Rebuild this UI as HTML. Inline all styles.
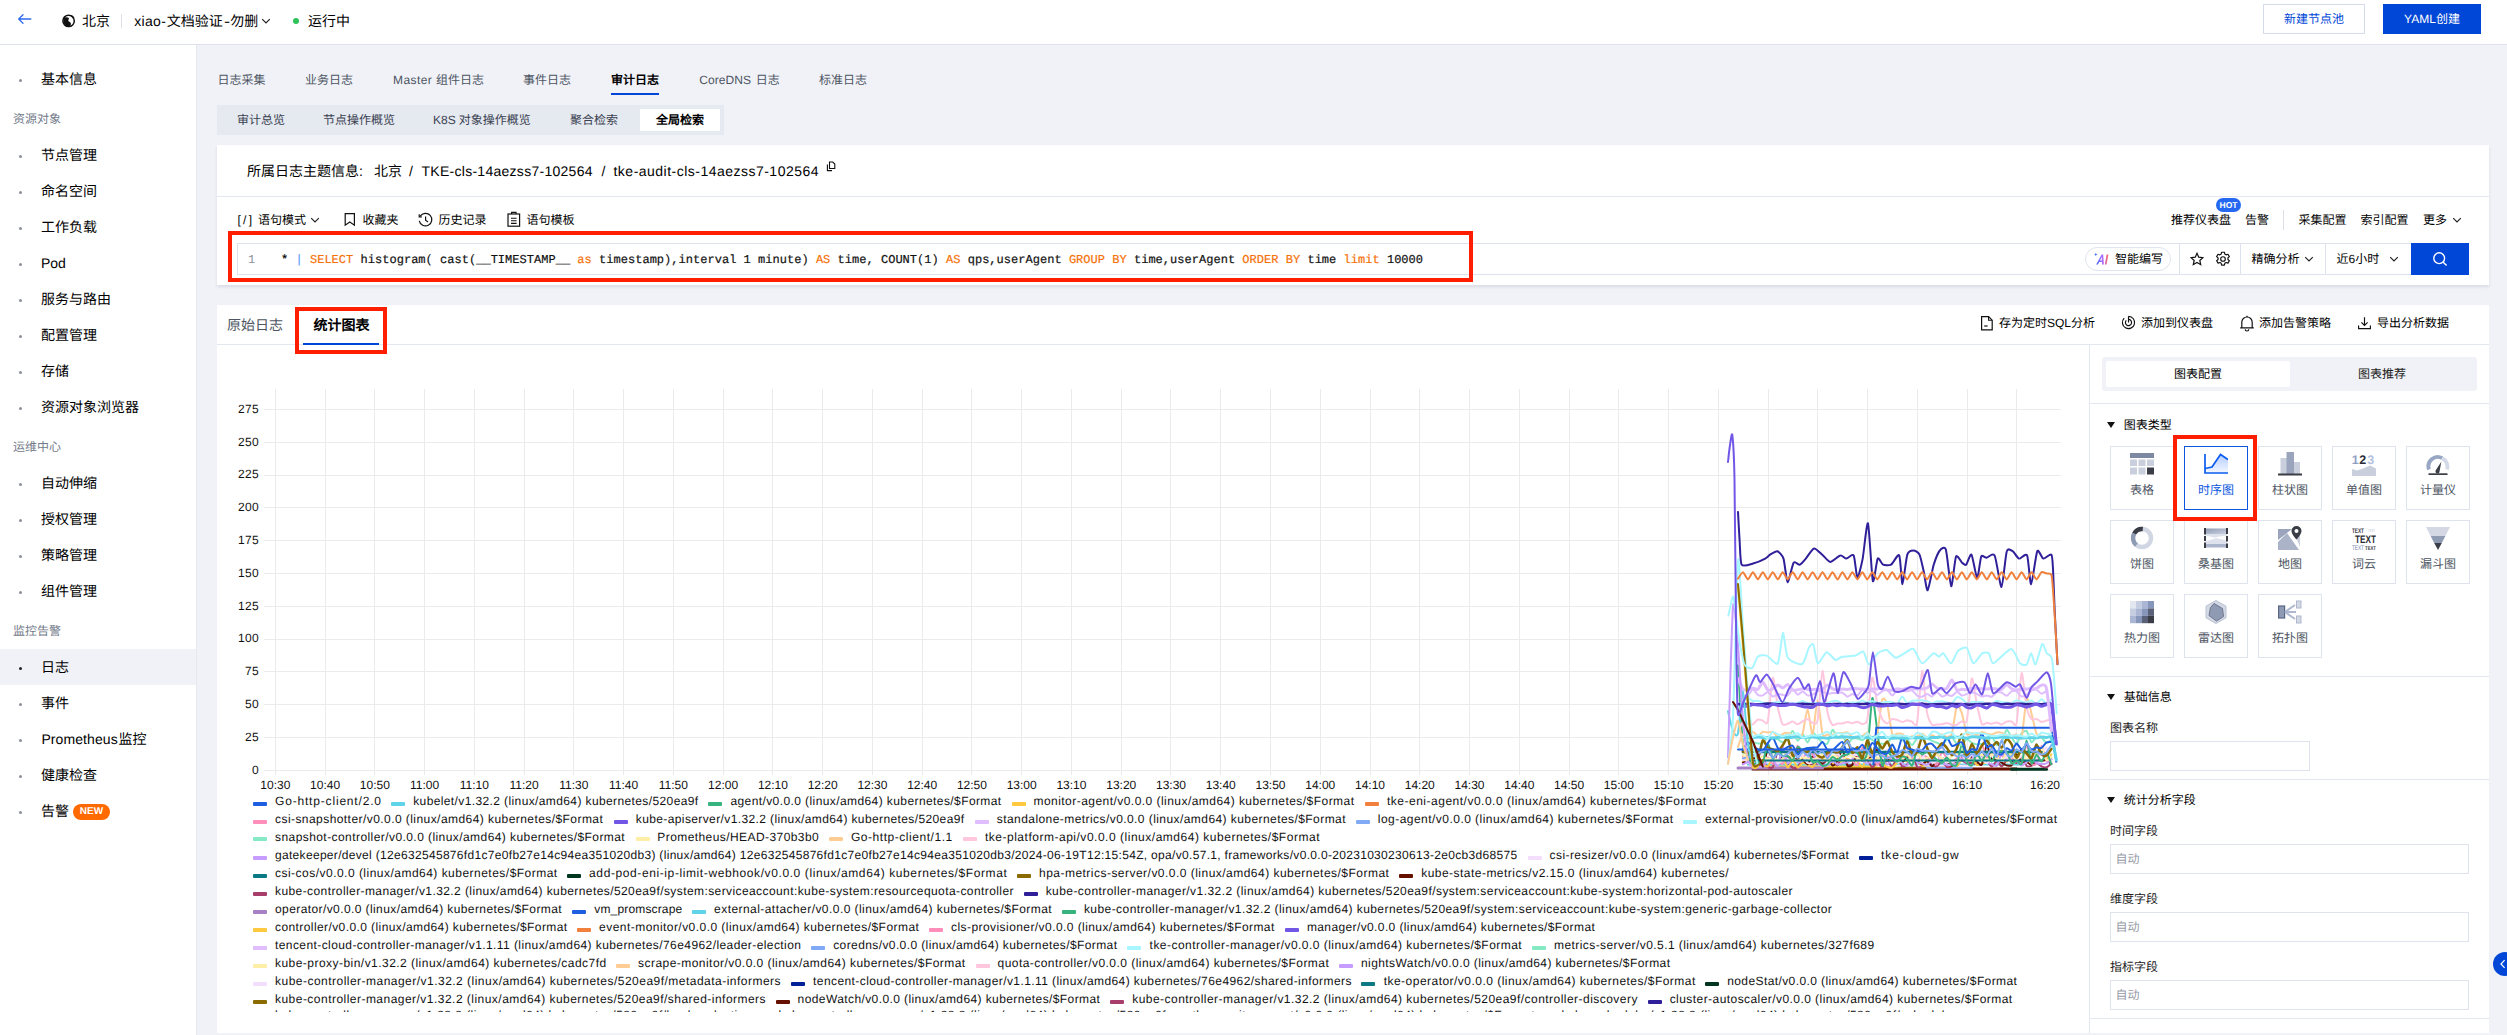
<!DOCTYPE html>
<html lang="zh-CN"><head><meta charset="utf-8"><title>TKE</title><style>
html,body{margin:0;padding:0;overflow:hidden;}
body{width:2507px;height:1035px;overflow:hidden;background:#f0f2f7;font-family:"Liberation Sans", sans-serif;position:relative;text-rendering:geometricPrecision;-webkit-font-smoothing:antialiased;}
.t{position:absolute;white-space:nowrap;margin:0;padding:0;}
.r{position:absolute;box-sizing:border-box;}
.m{font-family:"Liberation Mono", monospace;}
.k{color:#f5720a;}
.t i{font-style:normal;display:inline-block;width:1em;text-align:center;}
.cj{display:inline-block;white-space:nowrap;overflow:visible;vertical-align:top;}
</style></head><body>
<div class="r" style="left:0px;top:0px;width:2507px;height:44px;background:#fff;"></div>
<div class="r" style="left:0px;top:44px;width:2507px;height:1px;background:#dde2ee;"></div>
<svg class="r" style="left:17px;top:11px;" width="16" height="16" viewBox="0 0 16 16"><path d="M13.8 8H1.8M6 3.7L1.7 8 6 12.3" fill="none" stroke="#2f6bf2" stroke-width="1.3" stroke-linecap="round" stroke-linejoin="round"/></svg>
<svg class="r" style="left:62px;top:14px;" width="14" height="14" viewBox="0 0 14 14"><circle cx="6.6" cy="6.9" r="5.7" fill="none" stroke="#111" stroke-width="1.5"/><path d="M1.4 4.3C2.6 3.3 5.2 2.6 6.6 3.8 7.8 4.9 5.8 5.9 6.4 7c.5 .9 2.2 .8 2.5 2.4.3 1.5-.8 2.6-2 3.2L4 12 1.5 9z" fill="#111"/><path d="M7.8 1.3c.3 1.1 1.3 1.2 2.1 1.7.8 .5 .6 1.4 1.7 1.9l.6-1.5-1.8-2z" fill="#111"/></svg>
<div class="t " style="left:82px;top:11px;font-size:14px;line-height:20px;color:#000;"><i>北</i><i>京</i></div>
<div class="r" style="left:121px;top:14px;width:1px;height:14px;background:#dcdfe6;"></div>
<div class="t " style="left:134.3px;top:11px;font-size:14px;line-height:20px;color:#000;letter-spacing:0.310px;">xiao-</div>
<div class="t " style="left:166.8px;top:11px;font-size:14px;line-height:20px;color:#000;"><i>文</i><i>档</i><i>验</i><i>证</i></div>
<div class="t " style="left:224.3px;top:11px;font-size:14px;line-height:20px;color:#000;transform:scaleX(1.3);transform-origin:0 0;">-</div>
<div class="t " style="left:230.2px;top:11px;font-size:14px;line-height:20px;color:#000;"><i>勿</i><i>删</i></div>
<svg class="r" style="left:261px;top:16px;" width="10" height="10" viewBox="0 0 10 10"><path d="M1.2 3.2L5 7l3.8-3.8" fill="none" stroke="#222" stroke-width="1.2"/></svg>
<div class="r" style="left:293px;top:18px;width:6px;height:6px;background:#2fc25b;border-radius:50%;"></div>
<div class="t " style="left:308px;top:11px;font-size:14px;line-height:20px;color:#000;"><i>运</i><i>行</i><i>中</i></div>
<div class="r" style="left:2263px;top:4px;width:102px;height:30px;background:#fff;border:1px solid #d4dbe9;"></div>
<div class="t " style="left:2263px;top:9px;font-size:12px;line-height:20px;color:#0046d7;width:102px;text-align:center;"><i>新</i><i>建</i><i>节</i><i>点</i><i>池</i></div>
<div class="r" style="left:2383px;top:4px;width:98px;height:30px;background:#0046d7;"></div>
<div class="t " style="left:2383px;top:9px;font-size:12px;line-height:20px;color:#fff;width:98px;text-align:center;">YAML<i>创</i><i>建</i></div>
<div class="r" style="left:0px;top:45px;width:196px;height:990px;background:#fff;"></div>
<div class="r" style="left:196px;top:45px;width:1px;height:990px;background:#e4e8f0;"></div>
<div class="r" style="left:0px;top:649px;width:196px;height:36px;background:#f0f2f7;"></div>
<div class="r" style="left:19px;top:79px;width:3px;height:3px;background:#8a8f99;border-radius:50%;"></div>
<div class="t " style="left:41px;top:68px;font-size:14px;line-height:22px;color:#000;"><i>基</i><i>本</i><i>信</i><i>息</i></div>
<div class="r" style="left:19px;top:155px;width:3px;height:3px;background:#8a8f99;border-radius:50%;"></div>
<div class="t " style="left:41px;top:144px;font-size:14px;line-height:22px;color:#000;"><i>节</i><i>点</i><i>管</i><i>理</i></div>
<div class="r" style="left:19px;top:191px;width:3px;height:3px;background:#8a8f99;border-radius:50%;"></div>
<div class="t " style="left:41px;top:180px;font-size:14px;line-height:22px;color:#000;"><i>命</i><i>名</i><i>空</i><i>间</i></div>
<div class="r" style="left:19px;top:227px;width:3px;height:3px;background:#8a8f99;border-radius:50%;"></div>
<div class="t " style="left:41px;top:216px;font-size:14px;line-height:22px;color:#000;"><i>工</i><i>作</i><i>负</i><i>载</i></div>
<div class="r" style="left:19px;top:263px;width:3px;height:3px;background:#8a8f99;border-radius:50%;"></div>
<div class="t " style="left:41px;top:252px;font-size:14px;line-height:22px;color:#000;">Pod</div>
<div class="r" style="left:19px;top:299px;width:3px;height:3px;background:#8a8f99;border-radius:50%;"></div>
<div class="t " style="left:41px;top:288px;font-size:14px;line-height:22px;color:#000;"><i>服</i><i>务</i><i>与</i><i>路</i><i>由</i></div>
<div class="r" style="left:19px;top:335px;width:3px;height:3px;background:#8a8f99;border-radius:50%;"></div>
<div class="t " style="left:41px;top:324px;font-size:14px;line-height:22px;color:#000;"><i>配</i><i>置</i><i>管</i><i>理</i></div>
<div class="r" style="left:19px;top:371px;width:3px;height:3px;background:#8a8f99;border-radius:50%;"></div>
<div class="t " style="left:41px;top:360px;font-size:14px;line-height:22px;color:#000;"><i>存</i><i>储</i></div>
<div class="r" style="left:19px;top:407px;width:3px;height:3px;background:#8a8f99;border-radius:50%;"></div>
<div class="t " style="left:41px;top:396px;font-size:14px;line-height:22px;color:#000;"><i>资</i><i>源</i><i>对</i><i>象</i><i>浏</i><i>览</i><i>器</i></div>
<div class="r" style="left:19px;top:483px;width:3px;height:3px;background:#8a8f99;border-radius:50%;"></div>
<div class="t " style="left:41px;top:472px;font-size:14px;line-height:22px;color:#000;"><i>自</i><i>动</i><i>伸</i><i>缩</i></div>
<div class="r" style="left:19px;top:519px;width:3px;height:3px;background:#8a8f99;border-radius:50%;"></div>
<div class="t " style="left:41px;top:508px;font-size:14px;line-height:22px;color:#000;"><i>授</i><i>权</i><i>管</i><i>理</i></div>
<div class="r" style="left:19px;top:555px;width:3px;height:3px;background:#8a8f99;border-radius:50%;"></div>
<div class="t " style="left:41px;top:544px;font-size:14px;line-height:22px;color:#000;"><i>策</i><i>略</i><i>管</i><i>理</i></div>
<div class="r" style="left:19px;top:591px;width:3px;height:3px;background:#8a8f99;border-radius:50%;"></div>
<div class="t " style="left:41px;top:580px;font-size:14px;line-height:22px;color:#000;"><i>组</i><i>件</i><i>管</i><i>理</i></div>
<div class="r" style="left:19px;top:667px;width:3px;height:3px;background:#222;border-radius:50%;"></div>
<div class="t " style="left:41px;top:656px;font-size:14px;line-height:22px;color:#000;"><i>日</i><i>志</i></div>
<div class="r" style="left:19px;top:703px;width:3px;height:3px;background:#8a8f99;border-radius:50%;"></div>
<div class="t " style="left:41px;top:692px;font-size:14px;line-height:22px;color:#000;"><i>事</i><i>件</i></div>
<div class="r" style="left:19px;top:739px;width:3px;height:3px;background:#8a8f99;border-radius:50%;"></div>
<div class="t " style="left:41px;top:728px;font-size:14px;line-height:22px;color:#000;"></div>
<div class="r" style="left:19px;top:775px;width:3px;height:3px;background:#8a8f99;border-radius:50%;"></div>
<div class="t " style="left:41px;top:764px;font-size:14px;line-height:22px;color:#000;"><i>健</i><i>康</i><i>检</i><i>查</i></div>
<div class="r" style="left:19px;top:811px;width:3px;height:3px;background:#8a8f99;border-radius:50%;"></div>
<div class="t " style="left:41px;top:800px;font-size:14px;line-height:22px;color:#000;"><i>告</i><i>警</i></div>
<div class="t " style="left:41.4px;top:728px;font-size:14px;line-height:22px;color:#000;letter-spacing:0.091px;">Prometheus</div>
<div class="t " style="left:118.5px;top:728px;font-size:14px;line-height:22px;color:#000;"><i>监</i><i>控</i></div>
<div class="t " style="left:13px;top:109px;font-size:12px;line-height:20px;color:#727a89;"><i>资</i><i>源</i><i>对</i><i>象</i></div>
<div class="t " style="left:13px;top:437px;font-size:12px;line-height:20px;color:#727a89;"><i>运</i><i>维</i><i>中</i><i>心</i></div>
<div class="t " style="left:13px;top:621px;font-size:12px;line-height:20px;color:#727a89;"><i>监</i><i>控</i><i>告</i><i>警</i></div>
<div class="r" style="left:73px;top:804px;width:37px;height:16px;background:#ff6a00;border-radius:8px;"></div>
<div class="t " style="left:73px;top:804px;font-size:10px;line-height:16px;color:#fff;font-weight:700;width:37px;text-align:center;letter-spacing:.1px;">NEW</div>
<div class="t " style="left:393px;top:69.5px;font-size:12px;line-height:20px;color:#4d5563;letter-spacing:0.422px;">Master</div>
<div class="t " style="left:699.3px;top:69.5px;font-size:12px;line-height:20px;color:#4d5563;letter-spacing:0.057px;">CoreDNS</div>
<div class="t " style="left:217.5px;top:69.5px;font-size:12px;line-height:20px;color:#4d5563;"><i>日</i><i>志</i><i>采</i><i>集</i></div>
<div class="t " style="left:305px;top:69.5px;font-size:12px;line-height:20px;color:#4d5563;"><i>业</i><i>务</i><i>日</i><i>志</i></div>
<div class="t " style="left:436px;top:69.5px;font-size:12px;line-height:20px;color:#4d5563;"><i>组</i><i>件</i><i>日</i><i>志</i></div>
<div class="t " style="left:523px;top:69.5px;font-size:12px;line-height:20px;color:#4d5563;"><i>事</i><i>件</i><i>日</i><i>志</i></div>
<div class="t " style="left:611px;top:69.5px;font-size:12px;line-height:20px;color:#000;font-weight:700;"><i>审</i><i>计</i><i>日</i><i>志</i></div>
<div class="t " style="left:755.7px;top:69.5px;font-size:12px;line-height:20px;color:#4d5563;"><i>日</i><i>志</i></div>
<div class="t " style="left:819px;top:69.5px;font-size:12px;line-height:20px;color:#4d5563;"><i>标</i><i>准</i><i>日</i><i>志</i></div>
<div class="r" style="left:611px;top:93px;width:48px;height:2px;background:#0046d7;"></div>
<div class="r" style="left:217px;top:105px;width:507px;height:30px;background:#e5e9f0;"></div>
<div class="r" style="left:640px;top:109px;width:80px;height:22px;background:#fff;"></div>
<div class="t " style="left:237px;top:109.5px;font-size:12px;line-height:20px;color:#3a4150;"><i>审</i><i>计</i><i>总</i><i>览</i></div>
<div class="t " style="left:323px;top:109.5px;font-size:12px;line-height:20px;color:#3a4150;"><i>节</i><i>点</i><i>操</i><i>作</i><i>概</i><i>览</i></div>
<div class="t " style="left:458.8px;top:109.5px;font-size:12px;line-height:20px;color:#3a4150;"><i>对</i><i>象</i><i>操</i><i>作</i><i>概</i><i>览</i></div>
<div class="t " style="left:570px;top:109.5px;font-size:12px;line-height:20px;color:#3a4150;"><i>聚</i><i>合</i><i>检</i><i>索</i></div>
<div class="t " style="left:656px;top:109.5px;font-size:12px;line-height:20px;color:#000;font-weight:700;"><i>全</i><i>局</i><i>检</i><i>索</i></div>
<div class="t " style="left:433px;top:109.5px;font-size:12px;line-height:20px;color:#3a4150;">K8S</div>
<div class="r" style="left:217px;top:145px;width:2272px;height:140px;background:#fff;box-shadow:0 2px 3px rgba(20,30,60,.10);"></div>
<div class="t " style="left:247px;top:160px;font-size:14px;line-height:22px;color:#000;"><i>所</i><i>属</i><i>日</i><i>志</i><i>主</i><i>题</i><i>信</i><i>息</i>:</div>
<div class="t " style="left:374px;top:160px;font-size:14px;line-height:22px;color:#000;"><i>北</i><i>京</i></div>
<div class="t " style="left:409px;top:160px;font-size:14px;line-height:22px;color:#000;">/</div>
<div class="t " style="left:421.5px;top:160px;font-size:14px;line-height:22px;color:#000;letter-spacing:0.273px;">TKE-cls-14aezss7-102564</div>
<div class="t " style="left:601.5px;top:160px;font-size:14px;line-height:22px;color:#000;">/</div>
<div class="t " style="left:613.5px;top:160px;font-size:14px;line-height:22px;color:#000;letter-spacing:0.484px;">tke-audit-cls-14aezss7-102564</div>
<svg class="r" style="left:826px;top:161px;" width="10" height="11" viewBox="0 0 10 11"><path d="M3.5 1h3.2L8.8 3v4.5H3.5z" fill="none" stroke="#111" stroke-width="1.1"/><path d="M1.4 3.6v6h4.6" fill="none" stroke="#111" stroke-width="1.1"/></svg>
<div class="r" style="left:217px;top:196px;width:2272px;height:1px;background:#e3e7ef;"></div>
<div class="t " style="left:237.5px;top:209.5px;font-size:12px;line-height:20px;color:#000;letter-spacing:2.242px;">[/]</div>
<div class="t " style="left:258px;top:209.5px;font-size:12px;line-height:20px;color:#000;"><i>语</i><i>句</i><i>模</i><i>式</i></div>
<svg class="r" style="left:310px;top:215px;" width="10" height="10" viewBox="0 0 10 10"><path d="M1.2 3.2L5 7l3.8-3.8" fill="none" stroke="#222" stroke-width="1.2"/></svg>
<svg class="r" style="left:343px;top:212px;" width="14" height="15" viewBox="0 0 14 15"><path d="M2.2 1.6h9.2v11.6L6.8 10 2.2 13.2z" fill="none" stroke="#111" stroke-width="1.2" stroke-linejoin="miter"/></svg>
<div class="t " style="left:362.5px;top:209.5px;font-size:12px;line-height:20px;color:#000;"><i>收</i><i>藏</i><i>夹</i></div>
<svg class="r" style="left:417px;top:212px;" width="17" height="16" viewBox="0 0 17 16"><path d="M3.2 4.2A6.3 6.3 0 1 1 2.3 8.8" fill="none" stroke="#111" stroke-width="1.2"/><path d="M2.2 2.2v2.6h2.6" fill="none" stroke="#111" stroke-width="1.2"/><path d="M8.6 4.6V8.3l2.4 1.6" fill="none" stroke="#111" stroke-width="1.2"/></svg>
<div class="t " style="left:438.5px;top:209.5px;font-size:12px;line-height:20px;color:#000;"><i>历</i><i>史</i><i>记</i><i>录</i></div>
<svg class="r" style="left:506px;top:211px;" width="16" height="17" viewBox="0 0 16 17"><rect x="2" y="3" width="11.6" height="12.2" fill="none" stroke="#111" stroke-width="1.2"/><path d="M5.6 3V1.4h4.4V3" fill="none" stroke="#111" stroke-width="1.2"/><path d="M5 7.2h5.6M5 9.8h5.6M5 12.4h5.6" stroke="#111" stroke-width="1.1"/></svg>
<div class="t " style="left:526.5px;top:209.5px;font-size:12px;line-height:20px;color:#000;"><i>语</i><i>句</i><i>模</i><i>板</i></div>
<div class="t " style="left:2171px;top:209.5px;font-size:12px;line-height:20px;color:#000;"><i>推</i><i>荐</i><i>仪</i><i>表</i><i>盘</i></div>
<div class="r" style="left:2216px;top:198px;width:25px;height:14px;background:#2468f2;border-radius:7px;"></div>
<div class="t " style="left:2216px;top:198px;font-size:8.5px;line-height:14px;color:#fff;font-weight:700;width:25px;text-align:center;">HOT</div>
<div class="t " style="left:2245px;top:209.5px;font-size:12px;line-height:20px;color:#000;"><i>告</i><i>警</i></div>
<div class="r" style="left:2283px;top:210px;width:1px;height:20px;background:#dcdfe6;"></div>
<div class="t " style="left:2298.5px;top:209.5px;font-size:12px;line-height:20px;color:#000;"><i>采</i><i>集</i><i>配</i><i>置</i></div>
<div class="t " style="left:2360.5px;top:209.5px;font-size:12px;line-height:20px;color:#000;"><i>索</i><i>引</i><i>配</i><i>置</i></div>
<div class="t " style="left:2423px;top:209.5px;font-size:12px;line-height:20px;color:#000;"><i>更</i><i>多</i></div>
<svg class="r" style="left:2452px;top:215px;" width="10" height="10" viewBox="0 0 10 10"><path d="M1.2 3.2L5 7l3.8-3.8" fill="none" stroke="#222" stroke-width="1.2"/></svg>
<div class="r" style="left:237px;top:243px;width:2175px;height:32px;background:#fff;border:1px solid #dde2ee;"></div>
<div class="t  m" style="left:248px;top:249.7px;font-size:12px;line-height:20px;color:#8a8f99;">1</div>
<div class="t  m" style="left:281px;top:249.7px;font-size:12px;line-height:20px;color:#111;white-space:pre;letter-spacing:.026px;-webkit-text-stroke-width:.2px;"><span style="color:#000">* </span><span style="color:#5aa5f5">|</span> <span class="k">SELECT</span> histogram( cast(__TIMESTAMP__ <span class="k">as</span> timestamp),interval 1 minute) <span class="k">AS</span> time, COUNT(1) <span class="k">AS</span> qps,userAgent <span class="k">GROUP BY</span> time,userAgent <span class="k">ORDER BY</span> time <span class="k">limit</span> 10000</div>
<div class="r" style="left:2085px;top:247px;width:86px;height:24px;background:#fff;border:1px solid #dfe4ee;border-radius:12px;"></div>
<svg class="r" style="left:2094px;top:252px;" width="17" height="14" viewBox="0 0 17 14"><defs><linearGradient id="ai" x1="0" y1="0" x2="1" y2="0"><stop offset="0" stop-color="#3d6bff"/><stop offset=".55" stop-color="#b36bff"/><stop offset="1" stop-color="#ff6a5c"/></linearGradient></defs><path d="M2.2 12.4L7.6 2.4h1.6l.7 10h-1.8l-.15-2.3H5.2L4 12.4zM6 8.6h1.9l-.25-3.9zM12.6 2.4h1.8l-1.8 10h-1.8z" fill="url(#ai)"/><path d="M1.8 0.8l.5 1.2 1.2.5-1.2.5-.5 1.2-.5-1.2L.1 2.5l1.2-.5z" fill="#3d6bff"/></svg>
<div class="t " style="left:2115px;top:249px;font-size:12px;line-height:20px;color:#000;"><i>智</i><i>能</i><i>编</i><i>写</i></div>
<div class="r" style="left:2179px;top:244px;width:1px;height:30px;background:#dde2ee;"></div>
<svg class="r" style="left:2190px;top:252px;" width="14" height="14" viewBox="0 0 14 14"><path d="M7 1.3l1.75 3.9 4.2.45-3.15 2.85.9 4.15L7 10.5l-3.7 2.15.9-4.15L1.05 5.65l4.2-.45z" fill="none" stroke="#111" stroke-width="1.2" stroke-linejoin="miter"/></svg>
<svg class="r" style="left:2215px;top:251px;" width="16" height="16" viewBox="0 0 16 16"><path d="M6.6 1.2h2.8l.4 1.9 1.3.75 1.85-.6 1.4 2.4-1.45 1.3v1.5l1.45 1.3-1.4 2.4-1.85-.6-1.3.75-.4 1.9H6.6l-.4-1.9-1.3-.75-1.85.6-1.4-2.4 1.45-1.3v-1.5L1.65 5.65l1.4-2.4 1.85.6 1.3-.75z" fill="none" stroke="#111" stroke-width="1.15" stroke-linejoin="round"/><circle cx="8" cy="8" r="2.3" fill="none" stroke="#111" stroke-width="1.15"/></svg>
<div class="r" style="left:2240px;top:244px;width:1px;height:30px;background:#dde2ee;"></div>
<div class="t " style="left:2251.5px;top:249px;font-size:12px;line-height:20px;color:#000;"><i>精</i><i>确</i><i>分</i><i>析</i></div>
<svg class="r" style="left:2304px;top:254px;" width="10" height="10" viewBox="0 0 10 10"><path d="M1.2 3.2L5 7l3.8-3.8" fill="none" stroke="#222" stroke-width="1.2"/></svg>
<div class="r" style="left:2325px;top:244px;width:1px;height:30px;background:#dde2ee;"></div>
<div class="t " style="left:2336.5px;top:249px;font-size:12px;line-height:20px;color:#000;"><i>近</i>6<i>小</i><i>时</i></div>
<svg class="r" style="left:2389px;top:254px;" width="10" height="10" viewBox="0 0 10 10"><path d="M1.2 3.2L5 7l3.8-3.8" fill="none" stroke="#222" stroke-width="1.2"/></svg>
<div class="r" style="left:2411px;top:243px;width:58px;height:32px;background:#0046d7;"></div>
<svg class="r" style="left:2432px;top:251px;" width="16" height="16" viewBox="0 0 16 16"><circle cx="7.2" cy="7.2" r="5.4" fill="none" stroke="#fff" stroke-width="1.4"/><path d="M11.2 11.2l3.4 3.4" stroke="#fff" stroke-width="1.4"/></svg>
<div class="r" style="left:228px;top:231px;width:1245px;height:51px;border:4px solid #ff1e00;"></div>
<div class="r" style="left:217px;top:305px;width:2272px;height:728px;background:#fff;"></div>
<div class="r" style="left:217px;top:344px;width:2272px;height:1px;background:#e3e7ef;"></div>
<div class="t " style="left:227px;top:314px;font-size:14px;line-height:22px;color:#4d5563;"><i>原</i><i>始</i><i>日</i><i>志</i></div>
<div class="t " style="left:313.5px;top:314px;font-size:14px;line-height:22px;color:#000;font-weight:700;"><i>统</i><i>计</i><i>图</i><i>表</i></div>
<div class="r" style="left:303px;top:343px;width:76px;height:2px;background:#0046d7;"></div>
<div class="r" style="left:295px;top:307px;width:92px;height:47px;border:4px solid #ff1e00;"></div>
<svg class="r" style="left:1980px;top:315px;" width="14" height="16" viewBox="0 0 14 16"><path d="M1.6 1.6h7l3.6 3.6v9.6H1.6z" fill="none" stroke="#111" stroke-width="1.2"/><path d="M8.6 1.8v3.4h3.4" fill="none" stroke="#111" stroke-width="1.1"/><path d="M4.2 11h3.4" stroke="#111" stroke-width="1.2"/></svg>
<div class="t " style="left:1999px;top:312.5px;font-size:12px;line-height:20px;color:#000;"><span class="cj" style="width:48px"><i>存</i><i>为</i><i>定</i><i>时</i></span>SQL<span class="cj"><i>分</i><i>析</i></span></div>
<svg class="r" style="left:2121px;top:315px;" width="15" height="15" viewBox="0 0 15 15"><path d="M7.5 1.4A6.1 6.1 0 1 1 3.2 3.2" fill="none" stroke="#111" stroke-width="1.15"/><path d="M7.5 4.4A3.1 3.1 0 1 1 5.3 5.3" fill="none" stroke="#111" stroke-width="1.15"/><path d="M7.5 1.4v6.1" stroke="#111" stroke-width="1.15"/></svg>
<div class="t " style="left:2141px;top:312.5px;font-size:12px;line-height:20px;color:#000;"><i>添</i><i>加</i><i>到</i><i>仪</i><i>表</i><i>盘</i></div>
<svg class="r" style="left:2239px;top:314px;" width="16" height="18" viewBox="0 0 16 18"><path d="M1.2 13.8h13.6M2.8 13.8V8.2a5.2 5.2 0 0 1 10.4 0v5.6" fill="none" stroke="#111" stroke-width="1.2"/><path d="M6.2 15.2a1.8 1.8 0 0 0 3.6 0" fill="none" stroke="#111" stroke-width="1.15"/><path d="M8 1.8v1.3" stroke="#111" stroke-width="1.2"/></svg>
<div class="t " style="left:2259px;top:312.5px;font-size:12px;line-height:20px;color:#000;"><i>添</i><i>加</i><i>告</i><i>警</i><i>策</i><i>略</i></div>
<svg class="r" style="left:2357px;top:316px;" width="15" height="14" viewBox="0 0 15 14"><path d="M7.5 1.2v8M4.4 6.4l3.1 3 3.1-3" fill="none" stroke="#111" stroke-width="1.15"/><path d="M1.6 9.4v3.2h11.8V9.4" fill="none" stroke="#111" stroke-width="1.15"/></svg>
<div class="t " style="left:2377px;top:312.5px;font-size:12px;line-height:20px;color:#000;"><i>导</i><i>出</i><i>分</i><i>析</i><i>数</i><i>据</i></div>
<div class="r" style="left:2493px;top:952px;width:14px;height:24px;overflow:hidden"><div class="r" style="left:0;top:0;width:24px;height:24px;border-radius:50%;background:#0046d7"></div></div>
<svg class="r" style="left:2499px;top:959px;" width="8" height="10" viewBox="0 0 8 10"><path d="M5.6 1.2L2 5l3.6 3.8" fill="none" stroke="#fff" stroke-width="1.2"/></svg>
<svg class="r" style="left:0;top:0" width="2100" height="800" viewBox="0 0 2100 800"><path d="M264 770.5H2060.5" stroke="#eaebed" stroke-width="1"/><path d="M264 737.5H2060.5" stroke="#eaebed" stroke-width="1"/><path d="M264 704.5H2060.5" stroke="#eaebed" stroke-width="1"/><path d="M264 671.5H2060.5" stroke="#eaebed" stroke-width="1"/><path d="M264 639.5H2060.5" stroke="#eaebed" stroke-width="1"/><path d="M264 606.5H2060.5" stroke="#eaebed" stroke-width="1"/><path d="M264 573.5H2060.5" stroke="#eaebed" stroke-width="1"/><path d="M264 540.5H2060.5" stroke="#eaebed" stroke-width="1"/><path d="M264 507.5H2060.5" stroke="#eaebed" stroke-width="1"/><path d="M264 475.5H2060.5" stroke="#eaebed" stroke-width="1"/><path d="M264 442.5H2060.5" stroke="#eaebed" stroke-width="1"/><path d="M264 409.5H2060.5" stroke="#eaebed" stroke-width="1"/><path d="M275.5 389V775" stroke="#eaebed" stroke-width="1"/><path d="M325.5 389V775" stroke="#eaebed" stroke-width="1"/><path d="M374.5 389V775" stroke="#eaebed" stroke-width="1"/><path d="M424.5 389V775" stroke="#eaebed" stroke-width="1"/><path d="M474.5 389V775" stroke="#eaebed" stroke-width="1"/><path d="M524.5 389V775" stroke="#eaebed" stroke-width="1"/><path d="M573.5 389V775" stroke="#eaebed" stroke-width="1"/><path d="M623.5 389V775" stroke="#eaebed" stroke-width="1"/><path d="M673.5 389V775" stroke="#eaebed" stroke-width="1"/><path d="M723.5 389V775" stroke="#eaebed" stroke-width="1"/><path d="M772.5 389V775" stroke="#eaebed" stroke-width="1"/><path d="M822.5 389V775" stroke="#eaebed" stroke-width="1"/><path d="M872.5 389V775" stroke="#eaebed" stroke-width="1"/><path d="M922.5 389V775" stroke="#eaebed" stroke-width="1"/><path d="M971.5 389V775" stroke="#eaebed" stroke-width="1"/><path d="M1021.5 389V775" stroke="#eaebed" stroke-width="1"/><path d="M1071.5 389V775" stroke="#eaebed" stroke-width="1"/><path d="M1121.5 389V775" stroke="#eaebed" stroke-width="1"/><path d="M1170.5 389V775" stroke="#eaebed" stroke-width="1"/><path d="M1220.5 389V775" stroke="#eaebed" stroke-width="1"/><path d="M1270.5 389V775" stroke="#eaebed" stroke-width="1"/><path d="M1320.5 389V775" stroke="#eaebed" stroke-width="1"/><path d="M1370.5 389V775" stroke="#eaebed" stroke-width="1"/><path d="M1419.5 389V775" stroke="#eaebed" stroke-width="1"/><path d="M1469.5 389V775" stroke="#eaebed" stroke-width="1"/><path d="M1519.5 389V775" stroke="#eaebed" stroke-width="1"/><path d="M1569.5 389V775" stroke="#eaebed" stroke-width="1"/><path d="M1618.5 389V775" stroke="#eaebed" stroke-width="1"/><path d="M1668.5 389V775" stroke="#eaebed" stroke-width="1"/><path d="M1718.5 389V775" stroke="#eaebed" stroke-width="1"/><path d="M1768.5 389V775" stroke="#eaebed" stroke-width="1"/><path d="M1817.5 389V775" stroke="#eaebed" stroke-width="1"/><path d="M1867.5 389V775" stroke="#eaebed" stroke-width="1"/><path d="M1917.5 389V775" stroke="#eaebed" stroke-width="1"/><path d="M1967.5 389V775" stroke="#eaebed" stroke-width="1"/><path d="M2016.5 389V775" stroke="#eaebed" stroke-width="1"/><path d="M1752.9 769.1L1757.9 769.1L1762.8 769.1L1767.8 769.1L1772.8 769.1L1777.8 769.1L1782.7 769.1L1787.7 769.1L1792.7 769.1L1797.7 769.1L1802.6 769.1L1807.6 769.1L1812.6 769.1L1817.6 769.1L1822.5 769.1L1827.5 769.1L1832.5 769.1L1837.5 769.1L1842.4 769.1L1847.4 769.1L1852.4 769.1L1857.4 769.1L1862.4 769.1L1867.3 769.1L1872.3 769.1L1877.3 769.1L1882.3 769.1L1887.2 769.1L1892.2 769.1L1897.2 769.1L1902.2 769.1L1907.1 769.1L1912.1 769.1L1917.1 769.1L1922.1 769.1L1927.0 769.1L1932.0 769.1L1937.0 769.1L1942.0 769.1L1946.9 769.1L1951.9 769.1L1956.9 769.1L1961.9 769.1L1966.8 769.1L1971.8 769.1L1976.8 769.1L1981.8 769.1L1986.8 769.1L1991.7 769.1L1996.7 769.1L2001.7 769.1L2006.7 769.1L2011.6 769.1L2016.6 769.1" fill="none" stroke="#661100" stroke-width="3" stroke-linejoin="round" stroke-linecap="round"/><path d="M2011.6 769.3L2016.6 769.3L2021.6 769.3L2026.6 769.3L2031.5 769.3L2036.5 769.3L2041.5 769.3L2046.5 769.3" fill="none" stroke="#00361f" stroke-width="3" stroke-linejoin="round" stroke-linecap="round"/><path d="M1757.9 767.1L1762.8 767.1L1767.8 767.1L1772.8 767.1L1777.8 767.1L1782.7 767.1L1787.7 767.1L1792.7 767.1L1797.7 767.1L1802.6 767.1L1807.6 767.1L1812.6 767.1L1817.6 767.1L1822.5 767.1L1827.5 767.1L1832.5 767.1L1837.5 767.1L1842.4 767.1L1847.4 767.1L1852.4 767.1L1857.4 767.1L1862.4 767.1L1867.3 767.1L1872.3 767.1L1877.3 767.1L1882.3 767.1L1887.2 767.1L1892.2 767.1L1897.2 767.1L1902.2 767.1L1907.1 767.1L1912.1 767.1L1917.1 767.1L1922.1 767.1L1927.0 767.1L1932.0 767.1L1937.0 767.1L1942.0 767.1L1946.9 767.1L1951.9 767.1" fill="none" stroke="#8a6b00" stroke-width="2.5" stroke-linejoin="round" stroke-linecap="round"/><path d="M1752.9 766.2L1757.9 766.2L1762.8 766.2L1767.8 766.2L1772.8 766.2L1777.8 766.2L1782.7 766.2L1787.7 766.2L1792.7 766.2L1797.7 766.2L1802.6 766.2L1807.6 766.2L1812.6 766.2L1817.6 766.2L1822.5 766.2L1827.5 766.2L1832.5 766.2L1837.5 766.2L1842.4 766.2L1847.4 766.2L1852.4 766.2L1857.4 766.2L1862.4 766.2L1867.3 766.2L1872.3 766.2L1877.3 766.2L1882.3 766.2L1887.2 766.2L1892.2 766.2L1897.2 766.2" fill="none" stroke="#ffc93f" stroke-width="2" stroke-linejoin="round" stroke-linecap="round"/><path d="M1747.9 764.5L1752.9 764.5L1757.9 764.5L1762.8 764.5L1767.8 764.5L1772.8 764.5L1777.8 764.5L1782.7 764.5L1787.7 764.5L1792.7 764.5L1797.7 764.5L1802.6 764.5L1807.6 764.5L1812.6 764.5L1817.6 764.5L1822.5 764.5L1827.5 764.5L1832.5 764.5L1837.5 764.5L1842.4 764.5L1847.4 764.5L1852.4 764.5L1857.4 764.5L1862.4 764.5L1867.3 764.5L1872.3 764.5L1877.3 764.5L1882.3 764.5L1887.2 764.5L1892.2 764.5L1897.2 764.5L1902.2 764.5L1907.1 764.5L1912.1 764.5L1917.1 764.5L1922.1 764.5L1927.0 764.5L1932.0 764.5L1937.0 764.5L1942.0 764.5L1946.9 764.5L1951.9 764.5L1956.9 764.5L1961.9 764.5L1966.8 764.5L1971.8 764.5L1976.8 764.5L1981.8 764.5L1986.8 764.5L1991.7 764.5L1996.7 764.5L2001.7 764.5L2006.7 764.5L2011.6 764.5L2016.6 764.5L2021.6 764.5" fill="none" stroke="#5fd3e8" stroke-width="2" stroke-linejoin="round" stroke-linecap="round"/><path d="M1738.0 768.0L1742.9 768.0L1747.9 768.0L1752.9 768.0L1757.9 768.0L1762.8 768.0L1767.8 768.0L1772.8 768.0L1777.8 768.0L1782.7 768.0L1787.7 768.0L1792.7 768.0L1797.7 768.0L1802.6 768.0L1807.6 768.0L1812.6 768.0L1817.6 768.0L1822.5 768.0" fill="none" stroke="#a680c4" stroke-width="3" stroke-linejoin="round" stroke-linecap="round"/><path d="M1927.0 767.8L1932.0 767.8L1937.0 767.8L1942.0 767.8L1946.9 767.8L1951.9 767.8L1956.9 767.8L1961.9 767.8L1966.8 767.8L1971.8 767.8" fill="none" stroke="#80aaf5" stroke-width="2" stroke-linejoin="round" stroke-linecap="round"/><path d="M1877.3 765.8L1882.3 765.8L1887.2 765.8L1892.2 765.8L1897.2 765.8L1902.2 765.8L1907.1 765.8L1912.1 765.8L1917.1 765.8L1922.1 765.8L1927.0 765.8L1932.0 765.8L1937.0 765.8L1942.0 765.8L1946.9 765.8L1951.9 765.8L1956.9 765.8L1961.9 765.8L1966.8 765.8L1971.8 765.8" fill="none" stroke="#f3defc" stroke-width="2" stroke-linejoin="round" stroke-linecap="round"/><path d="M1742.9 764.2C1743.5 763.8 1746.8 760.5 1747.9 760.5C1749.0 760.4 1751.8 763.1 1752.9 763.8C1754.0 764.4 1756.8 766.4 1757.9 766.3C1759.0 766.2 1761.7 762.7 1762.8 762.8C1763.9 762.9 1766.7 766.6 1767.8 767.0C1768.9 767.5 1771.7 768.7 1772.8 767.1C1773.9 765.4 1776.7 752.7 1777.8 751.9C1778.9 751.2 1781.6 759.0 1782.7 760.2C1783.8 761.4 1786.6 762.1 1787.7 762.9C1788.8 763.7 1791.6 767.2 1792.7 767.7C1793.8 768.1 1796.6 768.3 1797.7 767.3C1798.8 766.3 1801.5 759.1 1802.6 758.7C1803.7 758.4 1806.5 763.8 1807.6 764.3C1808.7 764.8 1811.5 763.7 1812.6 763.7C1813.7 763.6 1816.5 763.8 1817.6 763.8C1818.7 763.9 1821.4 764.6 1822.5 764.2C1823.6 763.7 1826.4 760.2 1827.5 759.9C1828.6 759.6 1831.4 760.6 1832.5 761.2C1833.6 761.7 1836.4 765.8 1837.5 765.3C1838.6 764.8 1841.4 756.5 1842.4 756.5C1843.5 756.4 1846.3 763.7 1847.4 764.6C1848.5 765.5 1851.3 765.7 1852.4 764.7C1853.5 763.7 1856.3 756.0 1857.4 755.6C1858.5 755.1 1861.3 760.1 1862.4 760.6C1863.4 761.1 1866.2 759.3 1867.3 760.1C1868.4 760.8 1871.2 767.0 1872.3 767.2C1873.4 767.4 1876.2 761.7 1877.3 761.6C1878.4 761.6 1881.2 767.2 1882.3 767.1C1883.4 766.9 1886.1 760.2 1887.2 760.2C1888.3 760.2 1891.1 767.1 1892.2 766.8C1893.3 766.6 1896.1 757.8 1897.2 757.8C1898.3 757.7 1901.1 765.7 1902.2 766.4C1903.3 767.1 1906.0 765.6 1907.1 764.3C1908.2 762.9 1911.0 753.5 1912.1 753.8C1913.2 754.0 1916.0 765.5 1917.1 766.9C1918.2 768.2 1921.0 766.8 1922.1 766.1C1923.2 765.4 1925.9 760.2 1927.0 760.1C1928.1 760.0 1930.9 764.7 1932.0 765.4C1933.1 766.0 1935.9 766.6 1937.0 766.1C1938.1 765.6 1940.9 760.9 1942.0 761.0C1943.1 761.1 1945.8 766.4 1946.9 767.0C1948.0 767.5 1950.8 766.7 1951.9 766.1C1953.0 765.5 1955.8 762.3 1956.9 761.7C1958.0 761.1 1960.8 760.5 1961.9 760.7C1963.0 760.8 1965.8 762.9 1966.8 763.2C1967.9 763.4 1970.7 762.9 1971.8 763.0C1972.9 763.2 1975.7 764.1 1976.8 764.2C1977.9 764.3 1980.7 764.3 1981.8 764.0C1982.9 763.6 1985.7 760.7 1986.8 760.9C1987.8 761.2 1990.6 766.5 1991.7 766.6C1992.8 766.6 1995.6 761.4 1996.7 761.3C1997.8 761.3 2000.6 766.4 2001.7 766.3C2002.8 766.2 2005.6 761.0 2006.7 760.4C2007.8 759.7 2010.5 760.0 2011.6 760.3C2012.7 760.6 2015.5 763.4 2016.6 763.0C2017.7 762.6 2020.5 756.4 2021.6 756.7C2022.7 757.0 2025.5 764.9 2026.6 765.9C2027.7 766.9 2030.4 766.1 2031.5 765.8C2032.6 765.4 2035.4 763.0 2036.5 763.1C2037.6 763.1 2040.4 765.9 2041.5 766.4C2042.6 766.9 2045.4 767.6 2046.5 767.2C2047.6 766.9 2050.9 763.8 2051.4 763.4" fill="none" stroke="#a83e6b" stroke-width="2" stroke-linejoin="round" stroke-linecap="round"/><path d="M1742.9 761.3C1743.5 761.0 1746.8 757.5 1747.9 758.1C1749.0 758.8 1751.8 767.6 1752.9 767.6C1754.0 767.6 1756.8 758.2 1757.9 757.8C1759.0 757.4 1761.7 763.0 1762.8 763.9C1763.9 764.8 1766.7 767.0 1767.8 766.4C1768.9 765.8 1771.7 759.0 1772.8 758.4C1773.9 757.8 1776.7 761.0 1777.8 760.9C1778.9 760.7 1781.6 756.5 1782.7 757.2C1783.8 758.0 1786.6 767.2 1787.7 767.6C1788.8 767.9 1791.6 760.4 1792.7 760.4C1793.8 760.4 1796.6 767.3 1797.7 767.6C1798.8 767.8 1801.5 763.1 1802.6 762.7C1803.7 762.4 1806.5 764.0 1807.6 764.4C1808.7 764.9 1811.5 767.5 1812.6 767.0C1813.7 766.5 1816.5 760.8 1817.6 760.0C1818.7 759.3 1821.4 760.1 1822.5 760.0C1823.6 760.0 1826.4 759.0 1827.5 759.4C1828.6 759.9 1831.4 764.2 1832.5 764.1C1833.6 764.0 1836.4 758.4 1837.5 758.3C1838.6 758.2 1841.4 763.4 1842.4 763.4C1843.5 763.4 1846.3 758.9 1847.4 758.7C1848.5 758.5 1851.3 760.9 1852.4 761.2C1853.5 761.5 1856.3 761.0 1857.4 761.7C1858.5 762.3 1861.3 767.4 1862.4 766.9C1863.4 766.5 1866.2 758.1 1867.3 757.3C1868.4 756.6 1871.2 759.8 1872.3 760.1C1873.4 760.4 1876.2 759.7 1877.3 760.1C1878.4 760.4 1881.2 762.4 1882.3 763.1C1883.4 763.9 1886.1 766.4 1887.2 766.9C1888.3 767.4 1891.1 767.9 1892.2 767.5C1893.3 767.0 1896.1 763.5 1897.2 762.7C1898.3 762.0 1901.1 760.6 1902.2 760.4C1903.3 760.3 1906.0 761.5 1907.1 761.3C1908.2 761.2 1911.0 759.1 1912.1 759.0C1913.2 758.9 1916.0 759.9 1917.1 760.7C1918.2 761.4 1921.0 766.0 1922.1 766.0C1923.2 766.0 1925.9 761.7 1927.0 760.8C1928.1 760.0 1930.9 759.2 1932.0 758.4C1933.1 757.6 1935.9 753.8 1937.0 753.9C1938.1 754.0 1940.9 758.8 1942.0 759.3C1943.1 759.8 1945.8 758.3 1946.9 758.5C1948.0 758.8 1950.8 760.8 1951.9 761.7C1953.0 762.5 1955.8 766.6 1956.9 766.3C1958.0 766.1 1960.8 759.6 1961.9 759.0C1963.0 758.3 1965.8 760.4 1966.8 760.3C1967.9 760.2 1970.7 757.3 1971.8 757.8C1972.9 758.3 1975.7 764.3 1976.8 764.9C1977.9 765.5 1980.7 763.7 1981.8 763.4C1982.9 763.2 1985.7 763.1 1986.8 762.6C1987.8 762.1 1990.6 759.4 1991.7 759.0C1992.8 758.5 1995.6 759.6 1996.7 758.6C1997.8 757.6 2000.6 749.6 2001.7 749.9C2002.8 750.3 2005.6 761.3 2006.7 761.8C2007.8 762.3 2010.5 755.3 2011.6 754.4C2012.7 753.5 2015.5 752.9 2016.6 753.6C2017.7 754.3 2020.5 759.9 2021.6 760.8C2022.7 761.6 2025.5 761.1 2026.6 761.2C2027.7 761.2 2030.4 761.4 2031.5 761.2C2032.6 761.0 2035.4 760.2 2036.5 759.3C2037.6 758.4 2040.4 753.5 2041.5 753.4C2042.6 753.3 2045.4 758.6 2046.5 758.7C2047.6 758.8 2050.9 754.8 2051.4 754.4" fill="none" stroke="#ffc93f" stroke-width="2" stroke-linejoin="round" stroke-linecap="round"/><path d="M1742.9 762.8C1743.5 762.6 1746.8 761.5 1747.9 761.0C1749.0 760.5 1751.8 758.8 1752.9 758.5C1754.0 758.2 1756.8 757.4 1757.9 758.1C1759.0 758.9 1761.7 766.4 1762.8 765.5C1763.9 764.7 1766.7 750.7 1767.8 750.1C1768.9 749.4 1771.7 758.5 1772.8 759.9C1773.9 761.3 1776.7 762.8 1777.8 762.5C1778.9 762.2 1781.6 757.9 1782.7 757.2C1783.8 756.6 1786.6 756.3 1787.7 756.5C1788.8 756.8 1791.6 759.4 1792.7 759.6C1793.8 759.9 1796.6 758.9 1797.7 758.9C1798.8 758.9 1801.5 759.1 1802.6 759.7C1803.7 760.3 1806.5 764.6 1807.6 764.2C1808.7 763.8 1811.5 756.5 1812.6 756.2C1813.7 755.8 1816.5 760.1 1817.6 760.8C1818.7 761.6 1821.4 763.5 1822.5 763.1C1823.6 762.7 1826.4 757.2 1827.5 757.5C1828.6 757.7 1831.4 765.2 1832.5 765.6C1833.6 765.9 1836.4 762.4 1837.5 760.7C1838.6 758.9 1841.4 749.2 1842.4 749.7C1843.5 750.3 1846.3 764.1 1847.4 765.8C1848.5 767.4 1851.3 766.2 1852.4 764.6C1853.5 763.1 1856.3 752.2 1857.4 751.8C1858.5 751.4 1861.3 760.4 1862.4 761.0C1863.4 761.7 1866.2 758.1 1867.3 757.6C1868.4 757.1 1871.2 757.4 1872.3 756.5C1873.4 755.6 1876.2 749.0 1877.3 749.5C1878.4 750.0 1881.2 759.9 1882.3 760.9C1883.4 762.0 1886.1 758.8 1887.2 758.8C1888.3 758.8 1891.1 760.8 1892.2 761.0C1893.3 761.2 1896.1 760.4 1897.2 760.6C1898.3 760.7 1901.1 762.9 1902.2 762.5C1903.3 762.1 1906.0 757.5 1907.1 757.0C1908.2 756.5 1911.0 757.1 1912.1 757.5C1913.2 758.0 1916.0 760.2 1917.1 761.0C1918.2 761.7 1921.0 764.3 1922.1 764.4C1923.2 764.4 1925.9 761.0 1927.0 761.2C1928.1 761.4 1930.9 766.2 1932.0 766.2C1933.1 766.2 1935.9 761.9 1937.0 761.0C1938.1 760.1 1940.9 758.0 1942.0 758.0C1943.1 758.1 1945.8 760.5 1946.9 761.3C1948.0 762.2 1950.8 765.7 1951.9 765.8C1953.0 765.9 1955.8 763.1 1956.9 762.1C1958.0 761.1 1960.8 757.8 1961.9 756.8C1963.0 755.7 1965.8 752.7 1966.8 752.8C1967.9 753.0 1970.7 756.9 1971.8 757.9C1972.9 758.8 1975.7 760.7 1976.8 761.5C1977.9 762.2 1980.7 766.2 1981.8 764.5C1982.9 762.7 1985.7 745.9 1986.8 745.4C1987.8 744.8 1990.6 757.7 1991.7 759.2C1992.8 760.7 1995.6 758.9 1996.7 759.2C1997.8 759.6 2000.6 762.1 2001.7 762.7C2002.8 763.4 2005.6 765.1 2006.7 765.4C2007.8 765.6 2010.5 766.4 2011.6 765.2C2012.7 764.0 2015.5 754.8 2016.6 754.4C2017.7 754.0 2020.5 761.0 2021.6 761.9C2022.7 762.7 2025.5 761.8 2026.6 762.1C2027.7 762.4 2030.4 765.0 2031.5 764.8C2032.6 764.5 2035.4 760.3 2036.5 759.8C2037.6 759.4 2040.4 760.9 2041.5 760.9C2042.6 760.9 2045.4 759.7 2046.5 760.0C2047.6 760.4 2050.9 763.6 2051.4 764.0" fill="none" stroke="#661100" stroke-width="2" stroke-linejoin="round" stroke-linecap="round"/><path d="M1742.9 756.6C1743.5 757.2 1746.8 762.0 1747.9 761.8C1749.0 761.7 1751.8 756.2 1752.9 755.5C1754.0 754.7 1756.8 753.8 1757.9 754.7C1759.0 755.6 1761.7 763.4 1762.8 763.7C1763.9 764.1 1766.7 757.5 1767.8 757.5C1768.9 757.6 1771.7 763.8 1772.8 764.1C1773.9 764.5 1776.7 760.8 1777.8 760.7C1778.9 760.7 1781.6 764.9 1782.7 763.8C1783.8 762.8 1786.6 751.8 1787.7 751.1C1788.8 750.5 1791.6 758.6 1792.7 758.0C1793.8 757.4 1796.6 745.8 1797.7 745.7C1798.8 745.7 1801.5 756.5 1802.6 757.2C1803.7 757.9 1806.5 752.4 1807.6 752.1C1808.7 751.8 1811.5 753.6 1812.6 754.4C1813.7 755.3 1816.5 759.5 1817.6 759.7C1818.7 760.0 1821.4 757.1 1822.5 756.8C1823.6 756.4 1826.4 757.1 1827.5 756.3C1828.6 755.5 1831.4 749.8 1832.5 749.7C1833.6 749.5 1836.4 754.3 1837.5 755.2C1838.6 756.0 1841.4 756.6 1842.4 757.1C1843.5 757.7 1846.3 759.9 1847.4 760.2C1848.5 760.6 1851.3 760.1 1852.4 760.6C1853.5 761.2 1856.3 766.5 1857.4 765.0C1858.5 763.6 1861.3 748.3 1862.4 747.5C1863.4 746.6 1866.2 756.7 1867.3 757.4C1868.4 758.1 1871.2 753.0 1872.3 753.8C1873.4 754.6 1876.2 764.7 1877.3 765.0C1878.4 765.3 1881.2 757.7 1882.3 756.7C1883.4 755.8 1886.1 755.7 1887.2 756.1C1888.3 756.6 1891.1 760.5 1892.2 760.9C1893.3 761.3 1896.1 760.3 1897.2 759.9C1898.3 759.4 1901.1 757.2 1902.2 756.7C1903.3 756.2 1906.0 755.5 1907.1 755.6C1908.2 755.6 1911.0 756.4 1912.1 757.0C1913.2 757.6 1916.0 761.0 1917.1 760.9C1918.2 760.8 1921.0 756.3 1922.1 755.9C1923.2 755.5 1925.9 756.5 1927.0 757.1C1928.1 757.6 1930.9 760.1 1932.0 760.9C1933.1 761.7 1935.9 765.4 1937.0 764.4C1938.1 763.4 1940.9 752.8 1942.0 752.2C1943.1 751.5 1945.8 757.3 1946.9 758.4C1948.0 759.6 1950.8 762.7 1951.9 762.7C1953.0 762.7 1955.8 758.6 1956.9 758.2C1958.0 757.7 1960.8 758.1 1961.9 758.2C1963.0 758.4 1965.8 759.9 1966.8 759.6C1967.9 759.2 1970.7 754.8 1971.8 754.6C1972.9 754.5 1975.7 758.9 1976.8 757.8C1977.9 756.7 1980.7 744.8 1981.8 744.8C1982.9 744.7 1985.7 756.4 1986.8 757.4C1987.8 758.4 1990.6 754.5 1991.7 754.1C1992.8 753.8 1995.6 753.8 1996.7 754.0C1997.8 754.1 2000.6 755.0 2001.7 755.6C2002.8 756.3 2005.6 759.4 2006.7 759.8C2007.8 760.2 2010.5 759.3 2011.6 759.2C2012.7 759.0 2015.5 757.9 2016.6 758.4C2017.7 759.0 2020.5 765.9 2021.6 764.3C2022.7 762.8 2025.5 744.7 2026.6 744.6C2027.7 744.5 2030.4 761.4 2031.5 763.5C2032.6 765.5 2035.4 765.3 2036.5 763.4C2037.6 761.5 2040.4 746.3 2041.5 746.0C2042.6 745.7 2045.4 759.3 2046.5 760.7C2047.6 762.1 2050.9 759.1 2051.4 758.9" fill="none" stroke="#ff8fba" stroke-width="2" stroke-linejoin="round" stroke-linecap="round"/><path d="M1742.9 764.2C1743.5 764.0 1746.8 762.4 1747.9 762.0C1749.0 761.7 1751.8 760.3 1752.9 760.8C1754.0 761.3 1756.8 765.8 1757.9 766.4C1759.0 766.9 1761.7 766.8 1762.8 766.1C1763.9 765.5 1766.7 761.3 1767.8 760.5C1768.9 759.8 1771.7 758.8 1772.8 759.4C1773.9 760.0 1776.7 767.5 1777.8 766.1C1778.9 764.7 1781.6 747.0 1782.7 746.6C1783.8 746.3 1786.6 761.7 1787.7 763.1C1788.8 764.4 1791.6 758.9 1792.7 758.8C1793.8 758.7 1796.6 762.1 1797.7 762.3C1798.8 762.6 1801.5 761.2 1802.6 760.8C1803.7 760.4 1806.5 759.8 1807.6 758.8C1808.7 757.7 1811.5 751.1 1812.6 751.5C1813.7 752.0 1816.5 761.3 1817.6 762.9C1818.7 764.5 1821.4 765.8 1822.5 766.1C1823.6 766.3 1826.4 766.0 1827.5 765.5C1828.6 764.9 1831.4 761.3 1832.5 761.2C1833.6 761.1 1836.4 764.2 1837.5 764.4C1838.6 764.6 1841.4 763.4 1842.4 763.2C1843.5 762.9 1846.3 762.7 1847.4 762.3C1848.5 761.8 1851.3 760.1 1852.4 759.0C1853.5 757.9 1856.3 752.2 1857.4 752.3C1858.5 752.4 1861.3 759.0 1862.4 760.3C1863.4 761.5 1866.2 763.5 1867.3 763.6C1868.4 763.7 1871.2 761.3 1872.3 761.1C1873.4 760.9 1876.2 761.9 1877.3 761.8C1878.4 761.7 1881.2 760.2 1882.3 760.5C1883.4 760.8 1886.1 764.6 1887.2 764.5C1888.3 764.4 1891.1 759.9 1892.2 759.2C1893.3 758.6 1896.1 758.3 1897.2 758.8C1898.3 759.2 1901.1 762.4 1902.2 763.1C1903.3 763.9 1906.0 766.5 1907.1 765.7C1908.2 764.8 1911.0 755.7 1912.1 755.3C1913.2 754.9 1916.0 761.2 1917.1 762.1C1918.2 763.0 1921.0 763.2 1922.1 763.5C1923.2 763.8 1925.9 765.1 1927.0 764.8C1928.1 764.5 1930.9 761.8 1932.0 760.6C1933.1 759.4 1935.9 754.1 1937.0 754.3C1938.1 754.4 1940.9 760.4 1942.0 761.5C1943.1 762.7 1945.8 764.5 1946.9 764.8C1948.0 765.1 1950.8 764.6 1951.9 764.4C1953.0 764.3 1955.8 764.2 1956.9 763.6C1958.0 762.9 1960.8 758.8 1961.9 758.7C1963.0 758.5 1965.8 762.1 1966.8 762.1C1967.9 762.2 1970.7 760.4 1971.8 759.2C1972.9 758.0 1975.7 751.7 1976.8 751.4C1977.9 751.1 1980.7 754.9 1981.8 756.1C1982.9 757.4 1985.7 761.8 1986.8 762.6C1987.8 763.5 1990.6 763.8 1991.7 764.1C1992.8 764.5 1995.6 767.0 1996.7 765.9C1997.8 764.7 2000.6 754.2 2001.7 753.6C2002.8 753.0 2005.6 760.5 2006.7 760.8C2007.8 761.0 2010.5 756.2 2011.6 756.2C2012.7 756.2 2015.5 759.7 2016.6 760.7C2017.7 761.8 2020.5 765.4 2021.6 765.5C2022.7 765.7 2025.5 762.7 2026.6 762.0C2027.7 761.3 2030.4 758.9 2031.5 759.1C2032.6 759.2 2035.4 762.5 2036.5 763.0C2037.6 763.6 2040.4 764.0 2041.5 764.1C2042.6 764.1 2045.4 763.8 2046.5 763.3C2047.6 762.8 2050.9 759.8 2051.4 759.4" fill="none" stroke="#c69cff" stroke-width="2" stroke-linejoin="round" stroke-linecap="round"/><path d="M1742.9 760.0C1743.5 760.0 1746.8 761.0 1747.9 760.0C1749.0 759.0 1751.8 751.5 1752.9 751.0C1754.0 750.5 1756.8 755.0 1757.9 755.5C1759.0 755.9 1761.7 754.3 1762.8 755.1C1763.9 755.8 1766.7 762.0 1767.8 762.0C1768.9 761.9 1771.7 754.4 1772.8 754.6C1773.9 754.8 1776.7 763.2 1777.8 763.6C1778.9 764.0 1781.6 759.2 1782.7 758.1C1783.8 757.0 1786.6 754.9 1787.7 753.7C1788.8 752.4 1791.6 747.2 1792.7 746.8C1793.8 746.4 1796.6 749.2 1797.7 750.3C1798.8 751.3 1801.5 754.7 1802.6 756.1C1803.7 757.5 1806.5 762.3 1807.6 762.9C1808.7 763.6 1811.5 763.0 1812.6 762.3C1813.7 761.7 1816.5 757.1 1817.6 757.0C1818.7 756.9 1821.4 761.4 1822.5 761.5C1823.6 761.7 1826.4 758.6 1827.5 758.4C1828.6 758.2 1831.4 760.2 1832.5 759.7C1833.6 759.2 1836.4 753.8 1837.5 753.7C1838.6 753.6 1841.4 758.4 1842.4 758.7C1843.5 758.9 1846.3 756.8 1847.4 756.3C1848.5 755.8 1851.3 754.3 1852.4 754.2C1853.5 754.1 1856.3 755.1 1857.4 755.2C1858.5 755.2 1861.3 754.9 1862.4 754.9C1863.4 754.9 1866.2 755.2 1867.3 755.1C1868.4 755.0 1871.2 753.4 1872.3 753.8C1873.4 754.1 1876.2 758.2 1877.3 758.3C1878.4 758.5 1881.2 756.4 1882.3 755.4C1883.4 754.4 1886.1 749.7 1887.2 749.4C1888.3 749.2 1891.1 752.0 1892.2 753.4C1893.3 754.8 1896.1 761.4 1897.2 762.1C1898.3 762.7 1901.1 761.1 1902.2 759.4C1903.3 757.7 1906.0 746.4 1907.1 746.7C1908.2 747.1 1911.0 762.2 1912.1 762.6C1913.2 763.0 1916.0 750.9 1917.1 750.5C1918.2 750.1 1921.0 759.2 1922.1 759.0C1923.2 758.8 1925.9 748.5 1927.0 748.8C1928.1 749.1 1930.9 760.5 1932.0 761.9C1933.1 763.3 1935.9 761.8 1937.0 761.4C1938.1 760.9 1940.9 757.5 1942.0 757.6C1943.1 757.6 1945.8 761.4 1946.9 761.9C1948.0 762.4 1950.8 762.2 1951.9 762.0C1953.0 761.9 1955.8 761.3 1956.9 760.6C1958.0 759.8 1960.8 755.2 1961.9 755.3C1963.0 755.3 1965.8 761.2 1966.8 761.1C1967.9 761.0 1970.7 754.6 1971.8 754.2C1972.9 753.9 1975.7 757.6 1976.8 758.1C1977.9 758.6 1980.7 758.2 1981.8 758.8C1982.9 759.3 1985.7 763.7 1986.8 763.3C1987.8 762.9 1990.6 756.0 1991.7 755.4C1992.8 754.9 1995.6 757.7 1996.7 758.3C1997.8 758.9 2000.6 761.1 2001.7 761.0C2002.8 760.8 2005.6 756.6 2006.7 756.9C2007.8 757.2 2010.5 763.4 2011.6 763.7C2012.7 764.1 2015.5 760.7 2016.6 759.9C2017.7 759.1 2020.5 756.9 2021.6 756.3C2022.7 755.8 2025.5 754.7 2026.6 755.2C2027.7 755.7 2030.4 760.8 2031.5 761.1C2032.6 761.5 2035.4 759.3 2036.5 758.4C2037.6 757.6 2040.4 754.5 2041.5 753.4C2042.6 752.3 2045.4 746.9 2046.5 748.0C2047.6 749.2 2050.9 762.1 2051.4 763.8" fill="none" stroke="#f3defc" stroke-width="2" stroke-linejoin="round" stroke-linecap="round"/><path d="M1742.9 754.5C1743.5 755.2 1746.8 761.2 1747.9 760.6C1749.0 759.9 1751.8 748.7 1752.9 748.3C1754.0 748.0 1756.8 756.6 1757.9 757.5C1759.0 758.4 1761.7 756.4 1762.8 756.6C1763.9 756.7 1766.7 758.7 1767.8 758.8C1768.9 759.0 1771.7 757.7 1772.8 757.9C1773.9 758.1 1776.7 760.3 1777.8 760.5C1778.9 760.7 1781.6 761.0 1782.7 759.6C1783.8 758.2 1786.6 747.7 1787.7 747.6C1788.8 747.5 1791.6 757.3 1792.7 758.8C1793.8 760.2 1796.6 760.7 1797.7 760.6C1798.8 760.5 1801.5 757.8 1802.6 757.5C1803.7 757.3 1806.5 758.1 1807.6 758.4C1808.7 758.7 1811.5 760.5 1812.6 760.4C1813.7 760.3 1816.5 758.2 1817.6 757.6C1818.7 756.9 1821.4 754.3 1822.5 754.7C1823.6 755.1 1826.4 761.0 1827.5 761.1C1828.6 761.2 1831.4 756.1 1832.5 755.6C1833.6 755.1 1836.4 756.2 1837.5 756.8C1838.6 757.4 1841.4 761.3 1842.4 761.1C1843.5 760.9 1846.3 755.4 1847.4 754.9C1848.5 754.4 1851.3 756.0 1852.4 756.4C1853.5 756.7 1856.3 758.0 1857.4 758.2C1858.5 758.5 1861.3 758.9 1862.4 758.9C1863.4 758.8 1866.2 759.1 1867.3 758.1C1868.4 757.2 1871.2 750.3 1872.3 750.4C1873.4 750.4 1876.2 757.9 1877.3 758.6C1878.4 759.3 1881.2 756.8 1882.3 756.8C1883.4 756.8 1886.1 758.7 1887.2 758.6C1888.3 758.5 1891.1 756.0 1892.2 755.7C1893.3 755.4 1896.1 755.4 1897.2 755.9C1898.3 756.3 1901.1 759.9 1902.2 759.8C1903.3 759.7 1906.0 754.5 1907.1 754.6C1908.2 754.7 1911.0 760.7 1912.1 760.5C1913.2 760.3 1916.0 753.2 1917.1 753.2C1918.2 753.2 1921.0 760.1 1922.1 760.6C1923.2 761.1 1925.9 758.3 1927.0 757.8C1928.1 757.4 1930.9 756.5 1932.0 756.1C1933.1 755.8 1935.9 754.5 1937.0 754.7C1938.1 755.0 1940.9 757.9 1942.0 758.6C1943.1 759.3 1945.8 761.4 1946.9 761.1C1948.0 760.8 1950.8 756.4 1951.9 755.7C1953.0 755.0 1955.8 755.6 1956.9 755.0C1958.0 754.4 1960.8 749.7 1961.9 750.1C1963.0 750.5 1965.8 757.4 1966.8 758.5C1967.9 759.6 1970.7 760.5 1971.8 760.4C1972.9 760.2 1975.7 757.8 1976.8 757.2C1977.9 756.6 1980.7 754.4 1981.8 754.7C1982.9 755.0 1985.7 760.0 1986.8 760.0C1987.8 759.9 1990.6 754.3 1991.7 754.1C1992.8 753.9 1995.6 757.8 1996.7 758.4C1997.8 759.1 2000.6 760.6 2001.7 760.1C2002.8 759.5 2005.6 753.9 2006.7 753.4C2007.8 752.9 2010.5 754.9 2011.6 755.6C2012.7 756.3 2015.5 760.1 2016.6 759.7C2017.7 759.2 2020.5 751.6 2021.6 751.5C2022.7 751.5 2025.5 758.8 2026.6 759.3C2027.7 759.7 2030.4 756.3 2031.5 755.7C2032.6 755.1 2035.4 754.8 2036.5 753.9C2037.6 753.0 2040.4 746.5 2041.5 747.2C2042.6 747.9 2045.4 759.1 2046.5 760.1C2047.6 761.2 2050.9 757.3 2051.4 756.9" fill="none" stroke="#ffeea6" stroke-width="2" stroke-linejoin="round" stroke-linecap="round"/><path d="M1747.9 760.6L1752.9 760.6L1757.9 760.6L1762.8 760.6L1767.8 760.6L1772.8 760.6L1777.8 760.6L1782.7 760.6L1787.7 760.6L1792.7 760.6L1797.7 760.6L1802.6 760.6L1807.6 760.6L1812.6 760.6L1817.6 760.6L1822.5 760.6L1827.5 760.6L1832.5 760.6L1837.5 760.6L1842.4 760.6L1847.4 760.6L1852.4 760.6L1857.4 760.6L1862.4 760.6L1867.3 760.6L1872.3 760.6L1877.3 760.6L1882.3 760.6L1887.2 760.6L1892.2 760.6L1897.2 760.6L1902.2 760.6L1907.1 760.6L1912.1 760.6L1917.1 760.6L1922.1 760.6L1927.0 760.6L1932.0 760.6L1937.0 760.6L1942.0 760.6L1946.9 760.6L1951.9 760.6L1956.9 760.6L1961.9 760.6L1966.8 760.6L1971.8 760.6L1976.8 760.6L1981.8 760.6L1986.8 760.6L1991.7 760.6L1996.7 760.6L2001.7 760.6L2006.7 760.6L2011.6 760.6L2016.6 760.6L2021.6 760.6L2026.6 760.6L2031.5 760.6L2036.5 760.6L2041.5 760.6" fill="none" stroke="#0b7a85" stroke-width="2" stroke-linejoin="round" stroke-linecap="round"/><path d="M1742.9 752.0L1747.9 752.0L1752.9 752.0L1757.9 752.0L1762.8 752.0L1767.8 752.0L1772.8 752.0L1777.8 752.0L1782.7 752.0L1787.7 752.0L1792.7 752.0L1797.7 752.0L1802.6 752.0L1807.6 752.0L1812.6 752.0L1817.6 752.0L1822.5 752.0L1827.5 752.0L1832.5 752.0L1837.5 752.0L1842.4 752.0L1847.4 752.0L1852.4 752.0L1857.4 752.0L1862.4 752.0L1867.3 752.0L1872.3 752.0L1877.3 752.0L1882.3 752.0L1887.2 752.0L1892.2 752.0L1897.2 752.0L1902.2 752.0L1907.1 752.0L1912.1 752.0L1917.1 752.0L1922.1 752.0L1927.0 752.0L1932.0 752.0L1937.0 752.0L1942.0 752.0L1946.9 752.0L1951.9 752.0L1956.9 752.0L1961.9 752.0L1966.8 752.0L1971.8 752.0L1976.8 752.0L1981.8 752.0L1986.8 752.0L1991.7 752.0L1996.7 752.0L2001.7 752.0L2006.7 752.0L2011.6 752.0L2016.6 752.0L2021.6 752.0L2026.6 752.0L2031.5 752.0L2036.5 752.0L2041.5 752.0" fill="none" stroke="#0b7a85" stroke-width="2.5" stroke-linejoin="round" stroke-linecap="round"/><path d="M1738.0 665.4C1738.5 674.0 1741.8 734.4 1742.9 744.1C1744.0 753.8 1746.8 751.3 1747.9 753.6C1749.0 755.8 1751.8 763.6 1752.9 764.5C1754.0 765.4 1756.8 762.1 1757.9 761.9C1759.0 761.7 1761.7 764.7 1762.8 762.7C1763.9 760.7 1766.7 744.3 1767.8 743.8C1768.9 743.4 1771.7 757.8 1772.8 758.6C1773.9 759.4 1776.7 751.2 1777.8 750.9C1778.9 750.6 1781.6 755.5 1782.7 756.1C1783.8 756.6 1786.6 755.4 1787.7 755.9C1788.8 756.4 1791.6 761.4 1792.7 760.5C1793.8 759.5 1796.6 748.0 1797.7 747.0C1798.8 745.9 1801.5 750.7 1802.6 750.8C1803.7 750.9 1806.5 746.9 1807.6 748.1C1808.7 749.4 1811.5 760.9 1812.6 762.3C1813.7 763.7 1816.5 760.8 1817.6 761.2C1818.7 761.6 1821.4 765.5 1822.5 765.9C1823.6 766.2 1826.4 765.2 1827.5 764.2C1828.6 763.2 1831.4 757.5 1832.5 757.0C1833.6 756.5 1836.4 760.1 1837.5 760.0C1838.6 759.8 1841.4 756.2 1842.4 755.6C1843.5 755.0 1846.3 755.1 1847.4 754.6C1848.5 754.1 1851.3 751.0 1852.4 750.8C1853.5 750.6 1856.3 752.0 1857.4 753.0C1858.5 754.0 1861.3 759.7 1862.4 759.6C1863.4 759.5 1866.2 759.0 1867.3 752.2C1868.4 745.4 1871.2 700.5 1872.3 698.2C1873.4 695.9 1876.2 723.6 1877.3 731.0C1878.4 738.4 1881.2 763.3 1882.3 765.6C1883.4 767.9 1886.1 753.2 1887.2 752.3C1888.3 751.3 1891.1 756.0 1892.2 757.0C1893.3 758.1 1896.1 761.7 1897.2 761.7C1898.3 761.6 1901.1 756.9 1902.2 756.6C1903.3 756.2 1906.0 757.5 1907.1 758.5C1908.2 759.5 1911.0 766.5 1912.1 765.6C1913.2 764.8 1916.0 751.7 1917.1 750.5C1918.2 749.3 1921.0 754.3 1922.1 754.4C1923.2 754.6 1925.9 751.9 1927.0 752.1C1928.1 752.3 1930.9 755.1 1932.0 756.0C1933.1 756.8 1935.9 759.1 1937.0 759.8C1938.1 760.6 1940.9 763.2 1942.0 763.0C1943.1 762.7 1945.8 757.3 1946.9 757.5C1948.0 757.7 1950.8 764.1 1951.9 764.9C1953.0 765.7 1955.8 766.8 1956.9 764.5C1958.0 762.2 1960.8 744.6 1961.9 744.3C1963.0 744.0 1965.8 759.4 1966.8 761.7C1967.9 764.1 1970.7 766.4 1971.8 765.5C1972.9 764.6 1975.7 754.1 1976.8 753.6C1977.9 753.1 1980.7 760.9 1981.8 760.8C1982.9 760.8 1985.7 753.3 1986.8 753.4C1987.8 753.5 1990.6 761.8 1991.7 761.6C1992.8 761.4 1995.6 752.9 1996.7 751.8C1997.8 750.6 2000.6 751.4 2001.7 751.4C2002.8 751.5 2005.6 750.6 2006.7 751.9C2007.8 753.2 2010.5 762.4 2011.6 763.4C2012.7 764.4 2015.5 760.8 2016.6 760.9C2017.7 760.9 2020.5 766.0 2021.6 763.8C2022.7 761.5 2025.5 740.6 2026.6 740.6C2027.7 740.5 2030.4 761.9 2031.5 763.4C2032.6 765.0 2035.4 754.9 2036.5 754.7C2037.6 754.5 2040.4 761.7 2041.5 761.5C2042.6 761.3 2045.4 752.5 2046.5 752.8C2047.6 753.1 2050.9 763.1 2051.4 764.3" fill="none" stroke="#36b37e" stroke-width="2" stroke-linejoin="round" stroke-linecap="round"/><path d="M1742.9 735.6C1743.5 736.6 1746.8 743.9 1747.9 744.6C1749.0 745.4 1751.8 742.4 1752.9 742.2C1754.0 742.1 1756.8 743.3 1757.9 743.4C1759.0 743.5 1761.7 743.7 1762.8 743.0C1763.9 742.3 1766.7 737.7 1767.8 737.2C1768.9 736.7 1771.7 738.3 1772.8 738.5C1773.9 738.7 1776.7 738.8 1777.8 739.3C1778.9 739.7 1781.6 742.4 1782.7 742.3C1783.8 742.2 1786.6 739.7 1787.7 738.5C1788.8 737.2 1791.6 730.7 1792.7 730.9C1793.8 731.2 1796.6 740.5 1797.7 740.8C1798.8 741.2 1801.5 733.7 1802.6 733.9C1803.7 734.1 1806.5 742.6 1807.6 742.5C1808.7 742.3 1811.5 733.1 1812.6 732.5C1813.7 732.0 1816.5 736.4 1817.6 737.5C1818.7 738.6 1821.4 741.9 1822.5 742.5C1823.6 743.2 1826.4 744.9 1827.5 743.5C1828.6 742.1 1831.4 730.4 1832.5 729.8C1833.6 729.1 1836.4 736.9 1837.5 737.6C1838.6 738.2 1841.4 735.0 1842.4 735.7C1843.5 736.4 1846.3 743.2 1847.4 743.6C1848.5 743.9 1851.3 739.2 1852.4 738.7C1853.5 738.1 1856.3 738.4 1857.4 738.5C1858.5 738.7 1861.3 740.2 1862.4 740.0C1863.4 739.8 1866.2 736.6 1867.3 736.6C1868.4 736.6 1871.2 739.2 1872.3 740.0C1873.4 740.8 1876.2 743.2 1877.3 743.6C1878.4 744.0 1881.2 743.8 1882.3 743.7C1883.4 743.7 1886.1 743.7 1887.2 743.0C1888.3 742.3 1891.1 738.0 1892.2 737.3C1893.3 736.7 1896.1 736.8 1897.2 737.2C1898.3 737.5 1901.1 740.1 1902.2 740.3C1903.3 740.6 1906.0 738.8 1907.1 739.4C1908.2 739.9 1911.0 745.2 1912.1 745.1C1913.2 744.9 1916.0 738.9 1917.1 738.0C1918.2 737.0 1921.0 736.2 1922.1 736.3C1923.2 736.3 1925.9 737.9 1927.0 738.4C1928.1 738.9 1930.9 740.4 1932.0 740.9C1933.1 741.4 1935.9 742.3 1937.0 742.7C1938.1 743.1 1940.9 745.1 1942.0 744.7C1943.1 744.3 1945.8 740.3 1946.9 739.5C1948.0 738.7 1950.8 736.7 1951.9 737.1C1953.0 737.6 1955.8 743.1 1956.9 743.9C1958.0 744.8 1960.8 745.6 1961.9 745.0C1963.0 744.5 1965.8 739.2 1966.8 738.9C1967.9 738.7 1970.7 742.1 1971.8 742.7C1972.9 743.3 1975.7 744.4 1976.8 744.5C1977.9 744.6 1980.7 743.7 1981.8 743.7C1982.9 743.6 1985.7 744.5 1986.8 743.8C1987.8 743.0 1990.6 736.6 1991.7 736.7C1992.8 736.8 1995.6 744.3 1996.7 744.8C1997.8 745.4 2000.6 743.3 2001.7 741.6C2002.8 740.0 2005.6 730.3 2006.7 729.8C2007.8 729.3 2010.5 735.9 2011.6 737.5C2012.7 739.0 2015.5 744.4 2016.6 743.9C2017.7 743.5 2020.5 734.8 2021.6 733.3C2022.7 731.9 2025.5 730.1 2026.6 731.1C2027.7 732.1 2030.4 741.7 2031.5 742.3C2032.6 743.0 2035.4 737.3 2036.5 736.8C2037.6 736.3 2040.4 736.8 2041.5 737.4C2042.6 738.1 2045.4 742.8 2046.5 743.0C2047.6 743.3 2050.9 740.0 2051.4 739.7" fill="none" stroke="#85eac4" stroke-width="2" stroke-linejoin="round" stroke-linecap="round"/><path d="M1742.9 751.3C1743.5 751.5 1746.8 753.8 1747.9 752.9C1749.0 752.0 1751.8 742.6 1752.9 743.1C1754.0 743.7 1756.8 758.3 1757.9 758.0C1759.0 757.7 1761.7 741.5 1762.8 740.4C1763.9 739.3 1766.7 746.7 1767.8 747.6C1768.9 748.6 1771.7 748.9 1772.8 749.3C1773.9 749.7 1776.7 751.7 1777.8 751.3C1778.9 750.9 1781.6 746.7 1782.7 745.3C1783.8 743.9 1786.6 737.1 1787.7 738.3C1788.8 739.4 1791.6 754.5 1792.7 755.7C1793.8 756.9 1796.6 749.6 1797.7 749.1C1798.8 748.6 1801.5 750.9 1802.6 751.2C1803.7 751.5 1806.5 751.9 1807.6 751.5C1808.7 751.2 1811.5 747.5 1812.6 747.9C1813.7 748.3 1816.5 754.3 1817.6 755.4C1818.7 756.4 1821.4 757.7 1822.5 757.4C1823.6 757.2 1826.4 753.6 1827.5 752.9C1828.6 752.2 1831.4 751.0 1832.5 751.0C1833.6 750.9 1836.4 752.8 1837.5 752.4C1838.6 752.0 1841.4 748.7 1842.4 747.3C1843.5 746.0 1846.3 739.7 1847.4 740.3C1848.5 740.9 1851.3 752.2 1852.4 752.9C1853.5 753.7 1856.3 746.6 1857.4 747.2C1858.5 747.8 1861.3 759.0 1862.4 758.3C1863.4 757.5 1866.2 740.9 1867.3 740.3C1868.4 739.8 1871.2 753.3 1872.3 753.5C1873.4 753.7 1876.2 742.6 1877.3 742.1C1878.4 741.5 1881.2 748.5 1882.3 748.4C1883.4 748.3 1886.1 741.1 1887.2 741.5C1888.3 741.9 1891.1 750.3 1892.2 751.9C1893.3 753.5 1896.1 756.2 1897.2 756.4C1898.3 756.7 1901.1 756.2 1902.2 754.5C1903.3 752.8 1906.0 741.3 1907.1 741.2C1908.2 741.2 1911.0 753.0 1912.1 754.2C1913.2 755.4 1916.0 754.0 1917.1 752.2C1918.2 750.4 1921.0 737.9 1922.1 737.4C1923.2 736.9 1925.9 745.3 1927.0 747.6C1928.1 749.9 1930.9 758.0 1932.0 758.2C1933.1 758.4 1935.9 751.3 1937.0 749.7C1938.1 748.0 1940.9 743.4 1942.0 743.2C1943.1 743.0 1945.8 746.7 1946.9 748.0C1948.0 749.3 1950.8 755.2 1951.9 755.2C1953.0 755.2 1955.8 750.3 1956.9 748.1C1958.0 745.8 1960.8 733.7 1961.9 734.7C1963.0 735.7 1965.8 756.1 1966.8 757.2C1967.9 758.2 1970.7 744.5 1971.8 744.1C1972.9 743.7 1975.7 753.2 1976.8 753.4C1977.9 753.6 1980.7 747.2 1981.8 745.8C1982.9 744.3 1985.7 740.5 1986.8 740.6C1987.8 740.7 1990.6 746.7 1991.7 746.9C1992.8 747.0 1995.6 742.0 1996.7 742.1C1997.8 742.2 2000.6 747.9 2001.7 747.5C2002.8 747.2 2005.6 739.6 2006.7 739.2C2007.8 738.9 2010.5 742.4 2011.6 744.4C2012.7 746.4 2015.5 757.2 2016.6 757.7C2017.7 758.3 2020.5 749.8 2021.6 749.4C2022.7 748.9 2025.5 752.5 2026.6 753.5C2027.7 754.4 2030.4 759.2 2031.5 758.2C2032.6 757.2 2035.4 745.0 2036.5 744.5C2037.6 744.1 2040.4 753.2 2041.5 754.5C2042.6 755.7 2045.4 756.3 2046.5 755.7C2047.6 755.0 2050.9 749.6 2051.4 748.9" fill="none" stroke="#8a6b00" stroke-width="2.5" stroke-linejoin="round" stroke-linecap="round"/><path d="M1742.9 749.9C1743.5 749.1 1746.8 742.7 1747.9 742.3C1749.0 741.9 1751.8 745.6 1752.9 746.4C1754.0 747.2 1756.8 748.7 1757.9 749.3C1759.0 749.8 1761.7 751.7 1762.8 751.0C1763.9 750.3 1766.7 744.6 1767.8 743.1C1768.9 741.6 1771.7 737.1 1772.8 737.7C1773.9 738.2 1776.7 746.6 1777.8 748.0C1778.9 749.3 1781.6 750.0 1782.7 749.9C1783.8 749.8 1786.6 747.5 1787.7 747.0C1788.8 746.6 1791.6 744.9 1792.7 745.7C1793.8 746.6 1796.6 754.2 1797.7 754.6C1798.8 755.0 1801.5 750.2 1802.6 749.5C1803.7 748.8 1806.5 748.4 1807.6 748.2C1808.7 747.9 1811.5 747.5 1812.6 747.5C1813.7 747.4 1816.5 747.9 1817.6 747.3C1818.7 746.7 1821.4 741.6 1822.5 741.9C1823.6 742.2 1826.4 749.2 1827.5 750.1C1828.6 751.0 1831.4 751.0 1832.5 750.5C1833.6 750.0 1836.4 746.5 1837.5 745.5C1838.6 744.6 1841.4 741.2 1842.4 742.0C1843.5 742.8 1846.3 751.9 1847.4 752.6C1848.5 753.2 1851.3 748.5 1852.4 748.2C1853.5 747.9 1856.3 750.2 1857.4 749.8C1858.5 749.4 1861.3 744.6 1862.4 744.8C1863.4 745.0 1866.2 751.7 1867.3 751.5C1868.4 751.3 1871.2 743.3 1872.3 742.9C1873.4 742.6 1876.2 747.2 1877.3 748.4C1878.4 749.5 1881.2 752.8 1882.3 753.3C1883.4 753.8 1886.1 754.1 1887.2 753.2C1888.3 752.2 1891.1 744.6 1892.2 744.5C1893.3 744.4 1896.1 753.3 1897.2 752.5C1898.3 751.7 1901.1 737.9 1902.2 737.4C1903.3 736.9 1906.0 746.7 1907.1 748.0C1908.2 749.3 1911.0 749.1 1912.1 749.5C1913.2 749.9 1916.0 751.2 1917.1 751.3C1918.2 751.4 1921.0 751.1 1922.1 750.4C1923.2 749.6 1925.9 745.4 1927.0 744.7C1928.1 744.0 1930.9 743.3 1932.0 743.8C1933.1 744.3 1935.9 748.8 1937.0 749.1C1938.1 749.4 1940.9 747.7 1942.0 746.5C1943.1 745.2 1945.8 737.6 1946.9 737.6C1948.0 737.5 1950.8 745.1 1951.9 745.9C1953.0 746.6 1955.8 744.7 1956.9 744.3C1958.0 743.9 1960.8 741.4 1961.9 742.3C1963.0 743.2 1965.8 752.1 1966.8 752.9C1967.9 753.6 1970.7 749.5 1971.8 749.1C1972.9 748.8 1975.7 751.2 1976.8 749.4C1977.9 747.7 1980.7 733.2 1981.8 733.0C1982.9 732.7 1985.7 745.8 1986.8 747.1C1987.8 748.4 1990.6 744.4 1991.7 745.0C1992.8 745.7 1995.6 752.1 1996.7 753.1C1997.8 754.1 2000.6 754.8 2001.7 754.3C2002.8 753.8 2005.6 748.7 2006.7 748.3C2007.8 747.9 2010.5 751.1 2011.6 750.6C2012.7 750.1 2015.5 743.8 2016.6 743.6C2017.7 743.5 2020.5 749.4 2021.6 749.5C2022.7 749.6 2025.5 744.6 2026.6 744.6C2027.7 744.6 2030.4 749.2 2031.5 749.5C2032.6 749.9 2035.4 747.7 2036.5 747.5C2037.6 747.3 2040.4 748.4 2041.5 747.8C2042.6 747.3 2045.4 743.0 2046.5 742.4C2047.6 741.7 2050.9 742.0 2051.4 742.0" fill="none" stroke="#1d5fe0" stroke-width="2" stroke-linejoin="round" stroke-linecap="round"/><path d="M1742.9 758.4C1743.5 758.2 1746.8 757.4 1747.9 757.1C1749.0 756.8 1751.8 756.1 1752.9 755.7C1754.0 755.3 1756.8 754.0 1757.9 753.5C1759.0 753.0 1761.7 751.7 1762.8 751.3C1763.9 750.8 1766.7 748.5 1767.8 749.2C1768.9 749.9 1771.7 757.3 1772.8 757.8C1773.9 758.2 1776.7 753.7 1777.8 753.5C1778.9 753.4 1781.6 756.5 1782.7 756.5C1783.8 756.5 1786.6 754.2 1787.7 753.5C1788.8 752.8 1791.6 749.6 1792.7 750.1C1793.8 750.6 1796.6 757.8 1797.7 758.0C1798.8 758.2 1801.5 751.9 1802.6 751.7C1803.7 751.4 1806.5 755.9 1807.6 755.7C1808.7 755.4 1811.5 749.7 1812.6 749.5C1813.7 749.3 1816.5 753.8 1817.6 753.9C1818.7 754.1 1821.4 750.5 1822.5 751.0C1823.6 751.5 1826.4 758.3 1827.5 758.3C1828.6 758.3 1831.4 751.7 1832.5 750.9C1833.6 750.0 1836.4 751.0 1837.5 750.7C1838.6 750.3 1841.4 748.7 1842.4 747.7C1843.5 746.6 1846.3 740.7 1847.4 741.0C1848.5 741.3 1851.3 749.0 1852.4 750.1C1853.5 751.2 1856.3 750.9 1857.4 750.9C1858.5 750.9 1861.3 750.2 1862.4 750.2C1863.4 750.1 1866.2 749.7 1867.3 750.5C1868.4 751.3 1871.2 757.1 1872.3 757.5C1873.4 757.9 1876.2 754.5 1877.3 754.4C1878.4 754.2 1881.2 755.5 1882.3 756.0C1883.4 756.4 1886.1 758.3 1887.2 758.3C1888.3 758.4 1891.1 756.6 1892.2 756.2C1893.3 755.8 1896.1 755.4 1897.2 754.7C1898.3 754.0 1901.1 750.4 1902.2 750.1C1903.3 749.8 1906.0 751.3 1907.1 751.9C1908.2 752.5 1911.0 756.0 1912.1 755.7C1913.2 755.3 1916.0 749.4 1917.1 748.9C1918.2 748.4 1921.0 750.6 1922.1 750.8C1923.2 751.0 1925.9 750.7 1927.0 750.8C1928.1 750.9 1930.9 751.4 1932.0 751.4C1933.1 751.5 1935.9 751.6 1937.0 751.1C1938.1 750.5 1940.9 746.3 1942.0 746.7C1943.1 747.1 1945.8 753.7 1946.9 754.3C1948.0 755.0 1950.8 752.7 1951.9 752.9C1953.0 753.2 1955.8 756.2 1956.9 756.4C1958.0 756.7 1960.8 755.1 1961.9 755.2C1963.0 755.3 1965.8 757.6 1966.8 757.4C1967.9 757.3 1970.7 754.2 1971.8 754.1C1972.9 753.9 1975.7 756.6 1976.8 756.3C1977.9 756.0 1980.7 751.2 1981.8 751.2C1982.9 751.1 1985.7 756.0 1986.8 755.7C1987.8 755.4 1990.6 748.5 1991.7 748.6C1992.8 748.7 1995.6 757.6 1996.7 756.7C1997.8 755.7 2000.6 740.2 2001.7 740.0C2002.8 739.8 2005.6 752.8 2006.7 754.6C2007.8 756.4 2010.5 756.9 2011.6 756.4C2012.7 755.8 2015.5 749.7 2016.6 749.3C2017.7 748.8 2020.5 752.7 2021.6 752.0C2022.7 751.3 2025.5 743.2 2026.6 743.1C2027.7 743.1 2030.4 750.4 2031.5 751.3C2032.6 752.3 2035.4 751.2 2036.5 751.6C2037.6 751.9 2040.4 754.5 2041.5 754.5C2042.6 754.6 2045.4 753.3 2046.5 752.3C2047.6 751.2 2050.9 745.8 2051.4 745.0" fill="none" stroke="#80aaf5" stroke-width="2" stroke-linejoin="round" stroke-linecap="round"/><path d="M1738.0 746.8C1738.5 745.4 1741.8 735.4 1742.9 734.3C1744.0 733.3 1746.8 737.5 1747.9 737.2C1749.0 737.0 1751.8 731.8 1752.9 731.7C1754.0 731.6 1756.8 736.2 1757.9 736.2C1759.0 736.2 1761.7 732.1 1762.8 731.7C1763.9 731.3 1766.7 732.5 1767.8 732.5C1768.9 732.5 1771.7 731.3 1772.8 731.7C1773.9 732.2 1776.7 736.5 1777.8 736.7C1778.9 736.9 1781.6 734.4 1782.7 734.0C1783.8 733.5 1786.6 732.7 1787.7 732.8C1788.8 732.9 1791.6 734.3 1792.7 734.9C1793.8 735.4 1796.6 738.0 1797.7 737.8C1798.8 737.7 1801.5 736.7 1802.6 733.6C1803.7 730.4 1806.5 708.9 1807.6 709.0C1808.7 709.1 1811.5 735.7 1812.6 734.7C1813.7 733.8 1816.5 700.3 1817.6 700.2C1818.7 700.1 1821.4 730.2 1822.5 734.0C1823.6 737.8 1826.4 734.5 1827.5 734.6C1828.6 734.7 1831.4 735.2 1832.5 735.0C1833.6 734.8 1836.4 733.2 1837.5 733.0C1838.6 732.8 1841.4 733.3 1842.4 733.2C1843.5 733.1 1846.3 731.8 1847.4 732.3C1848.5 732.7 1851.3 736.7 1852.4 737.2C1853.5 737.8 1856.3 737.7 1857.4 737.6C1858.5 737.4 1861.3 736.5 1862.4 736.0C1863.4 735.4 1866.2 732.6 1867.3 732.8C1868.4 732.9 1871.2 737.1 1872.3 737.0C1873.4 737.0 1876.2 736.8 1877.3 732.7C1878.4 728.6 1881.2 702.7 1882.3 699.6C1883.4 696.5 1886.1 700.6 1887.2 704.4C1888.3 708.2 1891.1 730.9 1892.2 734.1C1893.3 737.3 1896.1 733.5 1897.2 733.5C1898.3 733.4 1901.1 733.3 1902.2 733.9C1903.3 734.4 1906.0 737.9 1907.1 738.1C1908.2 738.4 1911.0 736.4 1912.1 736.2C1913.2 736.0 1916.0 736.7 1917.1 736.4C1918.2 736.1 1921.0 733.6 1922.1 733.7C1923.2 733.8 1925.9 737.2 1927.0 737.4C1928.1 737.6 1930.9 735.2 1932.0 735.2C1933.1 735.2 1935.9 737.6 1937.0 737.5C1938.1 737.4 1940.9 734.3 1942.0 734.2C1943.1 734.2 1945.8 737.0 1946.9 737.0C1948.0 736.9 1950.8 737.2 1951.9 733.7C1953.0 730.2 1955.8 707.5 1956.9 705.2C1958.0 703.0 1960.8 710.3 1961.9 713.4C1963.0 716.6 1965.8 732.0 1966.8 734.1C1967.9 736.2 1970.7 732.7 1971.8 732.9C1972.9 733.0 1975.7 735.3 1976.8 735.2C1977.9 735.2 1980.7 732.2 1981.8 732.1C1982.9 731.9 1985.7 733.4 1986.8 733.6C1987.8 733.9 1990.6 734.6 1991.7 734.4C1992.8 734.3 1995.6 732.7 1996.7 732.5C1997.8 732.3 2000.6 732.3 2001.7 732.6C2002.8 732.9 2005.6 734.9 2006.7 735.3C2007.8 735.6 2010.5 735.8 2011.6 735.7C2012.7 735.6 2015.5 734.1 2016.6 734.3C2017.7 734.5 2020.5 741.7 2021.6 737.8C2022.7 733.9 2025.5 701.4 2026.6 698.8C2027.7 696.1 2030.4 709.8 2031.5 713.6C2032.6 717.5 2035.4 731.1 2036.5 733.7C2037.6 736.2 2040.4 736.2 2041.5 736.6C2042.6 737.0 2045.4 737.4 2046.5 737.4C2047.6 737.4 2050.9 736.7 2051.4 736.6" fill="none" stroke="#ffcd94" stroke-width="2" stroke-linejoin="round" stroke-linecap="round"/><path d="M1738.0 749.4L1742.9 749.4L1747.9 749.4L1752.9 749.4L1757.9 749.4L1762.8 749.4L1767.8 749.4L1772.8 749.4L1777.8 749.4L1782.7 749.4L1787.7 749.4L1792.7 749.4L1797.7 749.4L1802.6 749.4L1807.6 749.4L1812.6 749.4L1817.6 749.4L1822.5 749.4L1827.5 749.4L1832.5 749.4L1837.5 749.4L1842.4 749.4L1847.4 749.4L1852.4 749.4" fill="none" stroke="#1d5fe0" stroke-width="2" stroke-linejoin="round" stroke-linecap="round"/><path d="M1873.3 765.1L1876.3 727.7H2051.4L2056.4 762.5" fill="none" stroke="#1d5fe0" stroke-width="2" stroke-linejoin="round"/><path d="M1742.9 737.8C1743.5 737.7 1746.8 737.2 1747.9 737.2C1749.0 737.2 1751.8 737.9 1752.9 737.8C1754.0 737.8 1756.8 736.9 1757.9 736.9C1759.0 736.8 1761.7 737.3 1762.8 737.4C1763.9 737.5 1766.7 737.7 1767.8 737.8C1768.9 737.9 1771.7 737.9 1772.8 737.9C1773.9 737.8 1776.7 737.5 1777.8 737.4C1778.9 737.3 1781.6 736.8 1782.7 736.8C1783.8 736.9 1786.6 737.7 1787.7 737.7C1788.8 737.8 1791.6 737.5 1792.7 737.3C1793.8 737.2 1796.6 736.8 1797.7 736.8C1798.8 736.8 1801.5 737.6 1802.6 737.6C1803.7 737.7 1806.5 737.4 1807.6 737.3C1808.7 737.2 1811.5 736.8 1812.6 736.8C1813.7 736.9 1816.5 737.7 1817.6 737.8C1818.7 737.9 1821.4 737.7 1822.5 737.7C1823.6 737.8 1826.4 738.3 1827.5 738.2C1828.6 738.2 1831.4 737.5 1832.5 737.3C1833.6 737.2 1836.4 737.2 1837.5 737.2C1838.6 737.2 1841.4 737.1 1842.4 737.1C1843.5 737.1 1846.3 737.1 1847.4 737.1C1848.5 737.2 1851.3 737.6 1852.4 737.6C1853.5 737.6 1856.3 737.1 1857.4 737.0C1858.5 736.9 1861.3 736.9 1862.4 737.0C1863.4 737.0 1866.2 737.8 1867.3 737.8C1868.4 737.9 1871.2 737.6 1872.3 737.5C1873.4 737.5 1876.2 737.1 1877.3 737.1C1878.4 737.1 1881.2 737.5 1882.3 737.6C1883.4 737.6 1886.1 737.4 1887.2 737.5C1888.3 737.5 1891.1 738.2 1892.2 738.2C1893.3 738.3 1896.1 737.9 1897.2 737.9C1898.3 737.9 1901.1 737.9 1902.2 738.0C1903.3 738.0 1906.0 738.3 1907.1 738.3C1908.2 738.2 1911.0 737.7 1912.1 737.7C1913.2 737.6 1916.0 737.6 1917.1 737.6C1918.2 737.7 1921.0 738.2 1922.1 738.2C1923.2 738.3 1925.9 738.2 1927.0 738.1C1928.1 738.1 1930.9 737.6 1932.0 737.5C1933.1 737.5 1935.9 737.5 1937.0 737.4C1938.1 737.3 1940.9 736.7 1942.0 736.9C1943.1 737.0 1945.8 738.3 1946.9 738.4C1948.0 738.4 1950.8 737.2 1951.9 737.1C1953.0 737.0 1955.8 737.2 1956.9 737.2C1958.0 737.3 1960.8 737.4 1961.9 737.5C1963.0 737.6 1965.8 738.3 1966.8 738.2C1967.9 738.1 1970.7 737.0 1971.8 736.8C1972.9 736.7 1975.7 736.9 1976.8 737.0C1977.9 737.1 1980.7 737.6 1981.8 737.7C1982.9 737.8 1985.7 738.0 1986.8 738.0C1987.8 737.9 1990.6 737.0 1991.7 736.9C1992.8 736.9 1995.6 737.6 1996.7 737.6C1997.8 737.6 2000.6 737.0 2001.7 737.0C2002.8 737.0 2005.6 737.5 2006.7 737.5C2007.8 737.5 2010.5 736.9 2011.6 736.9C2012.7 737.0 2015.5 737.8 2016.6 737.9C2017.7 738.0 2020.5 738.0 2021.6 738.0C2022.7 737.9 2025.5 737.7 2026.6 737.7C2027.7 737.7 2030.4 737.8 2031.5 737.8C2032.6 737.8 2035.4 737.7 2036.5 737.7C2037.6 737.6 2040.4 737.1 2041.5 737.1C2042.6 737.0 2045.4 737.5 2046.5 737.5C2047.6 737.6 2050.3 735.3 2051.4 737.7C2052.5 740.2 2055.9 757.5 2056.4 759.9" fill="none" stroke="#5fd3e8" stroke-width="3" stroke-linejoin="round" stroke-linecap="round"/><path d="M1742.9 737.6C1743.5 737.4 1746.8 736.3 1747.9 736.2C1749.0 736.1 1751.8 736.9 1752.9 736.7C1754.0 736.6 1756.8 735.2 1757.9 735.0C1759.0 734.9 1761.7 735.2 1762.8 735.6C1763.9 735.9 1766.7 738.6 1767.8 738.2C1768.9 737.8 1771.7 732.4 1772.8 731.9C1773.9 731.5 1776.7 733.8 1777.8 734.3C1778.9 734.8 1781.6 736.3 1782.7 736.3C1783.8 736.3 1786.6 734.5 1787.7 734.4C1788.8 734.2 1791.6 735.1 1792.7 735.0C1793.8 734.9 1796.6 733.0 1797.7 733.3C1798.8 733.6 1801.5 737.3 1802.6 737.6C1803.7 738.0 1806.5 736.7 1807.6 736.5C1808.7 736.2 1811.5 735.5 1812.6 735.4C1813.7 735.4 1816.5 735.8 1817.6 735.6C1818.7 735.4 1821.4 734.2 1822.5 733.8C1823.6 733.4 1826.4 731.5 1827.5 731.8C1828.6 732.0 1831.4 736.0 1832.5 736.1C1833.6 736.2 1836.4 733.1 1837.5 732.9C1838.6 732.6 1841.4 734.0 1842.4 734.0C1843.5 734.1 1846.3 733.2 1847.4 733.2C1848.5 733.2 1851.3 734.3 1852.4 734.1C1853.5 734.0 1856.3 731.7 1857.4 732.2C1858.5 732.6 1861.3 738.0 1862.4 738.1C1863.4 738.2 1866.2 733.3 1867.3 733.3C1868.4 733.3 1871.2 738.0 1872.3 738.2C1873.4 738.4 1876.2 736.2 1877.3 735.5C1878.4 734.8 1881.2 731.5 1882.3 731.8C1883.4 732.0 1886.1 737.4 1887.2 737.7C1888.3 738.1 1891.1 735.6 1892.2 735.3C1893.3 735.1 1896.1 735.8 1897.2 735.8C1898.3 735.8 1901.1 735.3 1902.2 735.4C1903.3 735.4 1906.0 735.9 1907.1 736.1C1908.2 736.4 1911.0 738.1 1912.1 737.8C1913.2 737.4 1916.0 733.1 1917.1 732.8C1918.2 732.4 1921.0 734.1 1922.1 734.6C1923.2 735.2 1925.9 737.8 1927.0 737.5C1928.1 737.2 1930.9 732.6 1932.0 732.0C1933.1 731.4 1935.9 731.8 1937.0 732.2C1938.1 732.6 1940.9 735.5 1942.0 735.5C1943.1 735.6 1945.8 733.1 1946.9 732.7C1948.0 732.4 1950.8 731.9 1951.9 732.5C1953.0 733.1 1955.8 737.7 1956.9 738.0C1958.0 738.4 1960.8 736.4 1961.9 735.8C1963.0 735.1 1965.8 732.4 1966.8 732.1C1967.9 731.9 1970.7 733.6 1971.8 733.7C1972.9 733.8 1975.7 733.2 1976.8 733.1C1977.9 733.1 1980.7 733.2 1981.8 733.4C1982.9 733.5 1985.7 734.1 1986.8 734.4C1987.8 734.7 1990.6 735.8 1991.7 736.0C1992.8 736.1 1995.6 736.1 1996.7 735.9C1997.8 735.8 2000.6 735.0 2001.7 734.8C2002.8 734.7 2005.6 734.4 2006.7 734.5C2007.8 734.6 2010.5 735.8 2011.6 735.9C2012.7 736.0 2015.5 735.1 2016.6 735.1C2017.7 735.1 2020.5 735.9 2021.6 736.1C2022.7 736.3 2025.5 737.0 2026.6 736.7C2027.7 736.4 2030.4 733.5 2031.5 733.4C2032.6 733.4 2035.4 736.6 2036.5 736.6C2037.6 736.5 2040.4 733.2 2041.5 732.8C2042.6 732.5 2045.4 733.4 2046.5 733.5C2047.6 733.7 2050.9 734.1 2051.4 734.2" fill="none" stroke="#a8f6ff" stroke-width="2" stroke-linejoin="round" stroke-linecap="round"/><path d="M1738.0 731.0C1738.5 730.0 1741.8 722.9 1742.9 722.1C1744.0 721.3 1746.8 723.3 1747.9 723.6C1749.0 723.8 1751.8 724.9 1752.9 724.4C1754.0 724.0 1756.8 720.0 1757.9 719.5C1759.0 719.1 1761.7 720.3 1762.8 720.5C1763.9 720.7 1766.7 726.2 1767.8 721.5C1768.9 716.8 1771.7 679.4 1772.8 677.8C1773.9 676.3 1776.7 702.1 1777.8 707.2C1778.9 712.3 1781.6 722.7 1782.7 724.5C1783.8 726.3 1786.6 724.0 1787.7 723.7C1788.8 723.4 1791.6 721.5 1792.7 721.6C1793.8 721.7 1796.6 724.4 1797.7 724.3C1798.8 724.3 1801.5 721.9 1802.6 721.3C1803.7 720.7 1806.5 718.9 1807.6 719.0C1808.7 719.2 1811.5 722.6 1812.6 722.7C1813.7 722.9 1816.5 726.1 1817.6 720.4C1818.7 714.7 1821.4 671.8 1822.5 671.0C1823.6 670.1 1826.4 706.4 1827.5 712.3C1828.6 718.2 1831.4 723.8 1832.5 725.0C1833.6 726.2 1836.4 723.6 1837.5 723.4C1838.6 723.3 1841.4 723.6 1842.4 723.5C1843.5 723.3 1846.3 722.0 1847.4 721.9C1848.5 721.9 1851.3 723.3 1852.4 723.2C1853.5 723.2 1856.3 721.7 1857.4 721.8C1858.5 721.9 1861.3 724.3 1862.4 724.1C1863.4 723.8 1866.2 724.6 1867.3 719.5C1868.4 714.4 1871.2 679.4 1872.3 677.6C1873.4 675.9 1876.2 699.0 1877.3 703.5C1878.4 708.1 1881.2 716.9 1882.3 719.1C1883.4 721.3 1886.1 723.4 1887.2 723.4C1888.3 723.4 1891.1 719.3 1892.2 719.0C1893.3 718.6 1896.1 719.6 1897.2 719.9C1898.3 720.3 1901.1 722.1 1902.2 722.1C1903.3 722.2 1906.0 720.4 1907.1 720.3C1908.2 720.3 1911.0 721.5 1912.1 721.8C1913.2 722.1 1916.0 728.4 1917.1 722.8C1918.2 717.2 1921.0 672.1 1922.1 671.0C1923.2 669.8 1925.9 706.5 1927.0 712.4C1928.1 718.3 1930.9 723.3 1932.0 724.6C1933.1 726.0 1935.9 724.5 1937.0 724.4C1938.1 724.4 1940.9 724.5 1942.0 724.3C1943.1 724.2 1945.8 723.0 1946.9 723.1C1948.0 723.1 1950.8 724.5 1951.9 724.7C1953.0 724.9 1955.8 725.0 1956.9 724.7C1958.0 724.3 1960.8 721.8 1961.9 721.4C1963.0 720.9 1965.8 725.4 1966.8 720.6C1967.9 715.9 1970.7 680.1 1971.8 678.3C1972.9 676.4 1975.7 698.9 1976.8 703.9C1977.9 708.9 1980.7 721.8 1981.8 723.9C1982.9 726.0 1985.7 722.8 1986.8 722.8C1987.8 722.8 1990.6 723.9 1991.7 723.8C1992.8 723.8 1995.6 722.3 1996.7 722.4C1997.8 722.5 2000.6 724.7 2001.7 724.6C2002.8 724.5 2005.6 721.8 2006.7 721.5C2007.8 721.1 2010.5 721.2 2011.6 721.4C2012.7 721.6 2015.5 728.5 2016.6 723.1C2017.7 717.8 2020.5 674.8 2021.6 673.1C2022.7 671.3 2025.5 702.1 2026.6 707.2C2027.7 712.2 2030.4 717.7 2031.5 719.0C2032.6 720.3 2035.4 718.7 2036.5 719.0C2037.6 719.3 2040.4 721.7 2041.5 721.9C2042.6 722.1 2045.4 720.7 2046.5 720.6C2047.6 720.5 2050.3 718.5 2051.4 721.1C2052.5 723.7 2055.9 741.6 2056.4 744.1" fill="none" stroke="#ffc7dd" stroke-width="2" stroke-linejoin="round" stroke-linecap="round"/><path d="M1742.9 701.8C1743.5 701.4 1746.8 698.1 1747.9 698.0C1749.0 697.9 1751.8 700.7 1752.9 701.0C1754.0 701.3 1756.8 700.6 1757.9 700.8C1759.0 701.0 1761.7 702.4 1762.8 702.8C1763.9 703.1 1766.7 704.0 1767.8 704.0C1768.9 704.1 1771.7 703.3 1772.8 703.1C1773.9 702.9 1776.7 702.2 1777.8 702.0C1778.9 701.9 1781.6 701.3 1782.7 701.5C1783.8 701.6 1786.6 703.0 1787.7 703.2C1788.8 703.4 1791.6 703.4 1792.7 703.4C1793.8 703.4 1796.6 703.4 1797.7 703.1C1798.8 702.8 1801.5 701.0 1802.6 701.0C1803.7 701.0 1806.5 702.9 1807.6 703.2C1808.7 703.4 1811.5 703.1 1812.6 703.1C1813.7 703.1 1816.5 703.1 1817.6 703.1C1818.7 703.1 1821.4 703.4 1822.5 703.4C1823.6 703.4 1826.4 703.2 1827.5 702.9C1828.6 702.7 1831.4 701.5 1832.5 701.2C1833.6 701.0 1836.4 700.7 1837.5 701.0C1838.6 701.3 1841.4 703.6 1842.4 703.8C1843.5 704.0 1846.3 703.3 1847.4 703.1C1848.5 703.0 1851.3 702.5 1852.4 702.5C1853.5 702.4 1856.3 702.9 1857.4 702.6C1858.5 702.4 1861.3 700.5 1862.4 700.5C1863.4 700.5 1866.2 702.5 1867.3 702.6C1868.4 702.6 1871.2 701.0 1872.3 701.0C1873.4 701.0 1876.2 702.6 1877.3 702.8C1878.4 703.0 1881.2 702.7 1882.3 702.6C1883.4 702.5 1886.1 701.8 1887.2 701.8C1888.3 701.7 1891.1 702.0 1892.2 702.2C1893.3 702.5 1896.1 704.7 1897.2 704.1C1898.3 703.4 1901.1 696.4 1902.2 696.4C1903.3 696.3 1906.0 703.1 1907.1 703.5C1908.2 704.0 1911.0 701.0 1912.1 700.7C1913.2 700.3 1916.0 700.5 1917.1 700.4C1918.2 700.4 1921.0 700.3 1922.1 700.4C1923.2 700.5 1925.9 701.0 1927.0 701.3C1928.1 701.6 1930.9 703.3 1932.0 703.3C1933.1 703.4 1935.9 701.7 1937.0 701.4C1938.1 701.2 1940.9 701.2 1942.0 701.2C1943.1 701.3 1945.8 702.1 1946.9 702.3C1948.0 702.6 1950.8 704.2 1951.9 703.6C1953.0 703.1 1955.8 697.6 1956.9 697.1C1958.0 696.5 1960.8 698.2 1961.9 698.9C1963.0 699.6 1965.8 703.0 1966.8 703.4C1967.9 703.7 1970.7 702.2 1971.8 702.0C1972.9 701.9 1975.7 701.9 1976.8 701.9C1977.9 701.9 1980.7 701.8 1981.8 702.0C1982.9 702.2 1985.7 703.6 1986.8 703.8C1987.8 704.0 1990.6 704.1 1991.7 703.8C1992.8 703.5 1995.6 701.3 1996.7 701.1C1997.8 700.9 2000.6 701.9 2001.7 702.1C2002.8 702.3 2005.6 702.7 2006.7 702.8C2007.8 702.9 2010.5 703.2 2011.6 702.9C2012.7 702.7 2015.5 700.4 2016.6 700.3C2017.7 700.1 2020.5 701.5 2021.6 701.7C2022.7 702.0 2025.5 702.4 2026.6 702.3C2027.7 702.1 2030.4 700.2 2031.5 700.4C2032.6 700.6 2035.4 704.1 2036.5 704.0C2037.6 703.9 2040.4 699.3 2041.5 699.3C2042.6 699.2 2045.4 703.4 2046.5 703.4C2047.6 703.5 2050.9 700.2 2051.4 699.8" fill="none" stroke="#a8f6ff" stroke-width="2" stroke-linejoin="round" stroke-linecap="round"/><path d="M1742.9 703.7C1743.5 703.7 1746.8 703.8 1747.9 703.9C1749.0 704.0 1751.8 704.5 1752.9 704.5C1754.0 704.6 1756.8 704.4 1757.9 704.4C1759.0 704.4 1761.7 704.4 1762.8 704.4C1763.9 704.4 1766.7 704.3 1767.8 704.3C1768.9 704.2 1771.7 703.9 1772.8 703.9C1773.9 703.9 1776.7 704.3 1777.8 704.3C1778.9 704.3 1781.6 704.0 1782.7 704.0C1783.8 704.0 1786.6 704.0 1787.7 704.1C1788.8 704.1 1791.6 704.3 1792.7 704.3C1793.8 704.4 1796.6 704.5 1797.7 704.5C1798.8 704.4 1801.5 703.6 1802.6 703.6C1803.7 703.7 1806.5 704.6 1807.6 704.6C1808.7 704.5 1811.5 703.5 1812.6 703.5C1813.7 703.5 1816.5 704.4 1817.6 704.5C1818.7 704.6 1821.4 704.5 1822.5 704.5C1823.6 704.5 1826.4 704.6 1827.5 704.6C1828.6 704.6 1831.4 704.5 1832.5 704.4C1833.6 704.3 1836.4 703.9 1837.5 703.9C1838.6 703.8 1841.4 704.1 1842.4 704.0C1843.5 704.0 1846.3 703.5 1847.4 703.6C1848.5 703.6 1851.3 704.2 1852.4 704.3C1853.5 704.3 1856.3 704.1 1857.4 704.1C1858.5 704.1 1861.3 704.0 1862.4 704.0C1863.4 704.0 1866.2 704.1 1867.3 704.2C1868.4 704.2 1871.2 704.1 1872.3 704.1C1873.4 704.1 1876.2 703.9 1877.3 703.9C1878.4 704.0 1881.2 704.3 1882.3 704.4C1883.4 704.5 1886.1 704.6 1887.2 704.7C1888.3 704.7 1891.1 704.6 1892.2 704.5C1893.3 704.4 1896.1 703.8 1897.2 703.7C1898.3 703.6 1901.1 703.5 1902.2 703.6C1903.3 703.6 1906.0 704.2 1907.1 704.2C1908.2 704.2 1911.0 703.5 1912.1 703.5C1913.2 703.5 1916.0 704.1 1917.1 704.1C1918.2 704.1 1921.0 703.6 1922.1 703.7C1923.2 703.7 1925.9 704.2 1927.0 704.3C1928.1 704.4 1930.9 704.5 1932.0 704.5C1933.1 704.4 1935.9 703.8 1937.0 703.7C1938.1 703.6 1940.9 703.6 1942.0 703.6C1943.1 703.6 1945.8 703.7 1946.9 703.7C1948.0 703.7 1950.8 703.6 1951.9 703.7C1953.0 703.8 1955.8 704.5 1956.9 704.5C1958.0 704.6 1960.8 704.5 1961.9 704.4C1963.0 704.3 1965.8 703.6 1966.8 703.6C1967.9 703.5 1970.7 704.1 1971.8 704.1C1972.9 704.1 1975.7 703.8 1976.8 703.7C1977.9 703.7 1980.7 703.5 1981.8 703.6C1982.9 703.6 1985.7 703.9 1986.8 703.9C1987.8 704.0 1990.6 703.9 1991.7 703.9C1992.8 703.8 1995.6 703.4 1996.7 703.5C1997.8 703.5 2000.6 704.3 2001.7 704.4C2002.8 704.4 2005.6 704.0 2006.7 703.9C2007.8 703.8 2010.5 703.4 2011.6 703.5C2012.7 703.6 2015.5 704.5 2016.6 704.6C2017.7 704.7 2020.5 704.8 2021.6 704.7C2022.7 704.6 2025.5 703.9 2026.6 703.8C2027.7 703.6 2030.4 703.6 2031.5 703.6C2032.6 703.6 2035.4 703.5 2036.5 703.5C2037.6 703.6 2040.4 704.0 2041.5 704.1C2042.6 704.2 2045.4 704.3 2046.5 704.3C2047.6 704.3 2050.9 704.5 2051.4 704.6" fill="none" stroke="#a680c4" stroke-width="2" stroke-linejoin="round" stroke-linecap="round"/><path d="M1738.0 704.1C1738.5 704.1 1741.8 704.4 1742.9 704.4C1744.0 704.4 1746.8 703.9 1747.9 703.8C1749.0 703.8 1751.8 704.0 1752.9 704.1C1754.0 704.2 1756.8 704.4 1757.9 704.3C1759.0 704.3 1761.7 704.0 1762.8 704.0C1763.9 703.9 1766.7 703.7 1767.8 703.6C1768.9 703.6 1771.7 703.6 1772.8 703.7C1773.9 703.7 1776.7 704.3 1777.8 704.3C1778.9 704.4 1781.6 704.0 1782.7 704.0C1783.8 703.9 1786.6 703.8 1787.7 703.8C1788.8 703.9 1791.6 704.3 1792.7 704.3C1793.8 704.4 1796.6 704.2 1797.7 704.1C1798.8 704.1 1801.5 703.7 1802.6 703.7C1803.7 703.7 1806.5 704.1 1807.6 704.1C1808.7 704.2 1811.5 704.4 1812.6 704.4C1813.7 704.4 1816.5 704.0 1817.6 704.0C1818.7 704.0 1821.4 704.2 1822.5 704.3C1823.6 704.4 1826.4 704.6 1827.5 704.6C1828.6 704.6 1831.4 704.1 1832.5 704.1C1833.6 704.0 1836.4 703.9 1837.5 704.0C1838.6 704.0 1841.4 704.2 1842.4 704.2C1843.5 704.2 1846.3 704.1 1847.4 704.1C1848.5 704.2 1851.3 704.5 1852.4 704.5C1853.5 704.5 1856.3 704.0 1857.4 703.9C1858.5 703.9 1861.3 704.1 1862.4 704.1C1863.4 704.0 1866.2 703.6 1867.3 703.6C1868.4 703.7 1871.2 704.4 1872.3 704.4C1873.4 704.4 1876.2 703.6 1877.3 703.6C1878.4 703.6 1881.2 704.3 1882.3 704.4C1883.4 704.5 1886.1 704.6 1887.2 704.6C1888.3 704.5 1891.1 704.1 1892.2 704.1C1893.3 704.0 1896.1 703.9 1897.2 703.9C1898.3 703.9 1901.1 704.3 1902.2 704.3C1903.3 704.3 1906.0 704.0 1907.1 704.0C1908.2 703.9 1911.0 704.1 1912.1 704.2C1913.2 704.2 1916.0 704.6 1917.1 704.5C1918.2 704.5 1921.0 703.6 1922.1 703.6C1923.2 703.6 1925.9 704.5 1927.0 704.6C1928.1 704.7 1930.9 704.4 1932.0 704.4C1933.1 704.3 1935.9 704.2 1937.0 704.2C1938.1 704.2 1940.9 704.2 1942.0 704.2C1943.1 704.2 1945.8 703.9 1946.9 703.9C1948.0 703.8 1950.8 703.9 1951.9 704.0C1953.0 704.0 1955.8 704.0 1956.9 704.0C1958.0 704.0 1960.8 703.8 1961.9 703.9C1963.0 704.0 1965.8 704.5 1966.8 704.6C1967.9 704.7 1970.7 704.7 1971.8 704.6C1972.9 704.6 1975.7 704.2 1976.8 704.2C1977.9 704.2 1980.7 704.6 1981.8 704.5C1982.9 704.5 1985.7 703.8 1986.8 703.7C1987.8 703.7 1990.6 704.0 1991.7 704.0C1992.8 704.0 1995.6 703.6 1996.7 703.6C1997.8 703.6 2000.6 704.3 2001.7 704.3C2002.8 704.3 2005.6 703.7 2006.7 703.7C2007.8 703.7 2010.5 704.2 2011.6 704.2C2012.7 704.2 2015.5 703.7 2016.6 703.7C2017.7 703.7 2020.5 703.8 2021.6 703.8C2022.7 703.9 2025.5 704.1 2026.6 704.2C2027.7 704.2 2030.4 704.2 2031.5 704.2C2032.6 704.2 2035.4 704.3 2036.5 704.3C2037.6 704.3 2040.4 704.3 2041.5 704.2C2042.6 704.1 2045.9 703.9 2046.5 703.8" fill="none" stroke="#2f1f99" stroke-width="2.5" stroke-linejoin="round" stroke-linecap="round"/><path d="M1742.9 706.2C1743.5 706.2 1746.8 706.5 1747.9 706.3C1749.0 706.1 1751.8 704.6 1752.9 704.4C1754.0 704.3 1756.8 704.8 1757.9 704.9C1759.0 705.0 1761.7 705.1 1762.8 705.4C1763.9 705.6 1766.7 707.1 1767.8 706.9C1768.9 706.8 1771.7 704.4 1772.8 704.2C1773.9 704.0 1776.7 705.2 1777.8 705.4C1778.9 705.5 1781.6 705.5 1782.7 705.4C1783.8 705.4 1786.6 705.1 1787.7 704.9C1788.8 704.8 1791.6 704.0 1792.7 704.1C1793.8 704.1 1796.6 704.9 1797.7 705.2C1798.8 705.4 1801.5 706.2 1802.6 706.4C1803.7 706.6 1806.5 707.0 1807.6 707.1C1808.7 707.2 1811.5 707.6 1812.6 707.3C1813.7 706.9 1816.5 704.3 1817.6 704.0C1818.7 703.7 1821.4 704.2 1822.5 704.3C1823.6 704.5 1826.4 705.7 1827.5 705.7C1828.6 705.8 1831.4 704.7 1832.5 704.7C1833.6 704.7 1836.4 705.7 1837.5 705.7C1838.6 705.7 1841.4 705.0 1842.4 705.0C1843.5 705.0 1846.3 705.7 1847.4 705.7C1848.5 705.8 1851.3 705.2 1852.4 705.2C1853.5 705.2 1856.3 705.6 1857.4 705.9C1858.5 706.2 1861.3 707.5 1862.4 707.6C1863.4 707.7 1866.2 707.2 1867.3 706.8C1868.4 706.4 1871.2 704.3 1872.3 704.2C1873.4 704.1 1876.2 705.6 1877.3 705.8C1878.4 706.0 1881.2 706.1 1882.3 706.1C1883.4 706.1 1886.1 705.6 1887.2 705.6C1888.3 705.5 1891.1 705.5 1892.2 705.4C1893.3 705.3 1896.1 704.6 1897.2 704.8C1898.3 705.0 1901.1 707.4 1902.2 707.6C1903.3 707.7 1906.0 706.6 1907.1 706.2C1908.2 705.9 1911.0 704.2 1912.1 704.0C1913.2 703.8 1916.0 704.1 1917.1 704.2C1918.2 704.3 1921.0 704.7 1922.1 705.0C1923.2 705.3 1925.9 706.9 1927.0 706.9C1928.1 706.9 1930.9 705.3 1932.0 705.3C1933.1 705.2 1935.9 706.4 1937.0 706.6C1938.1 706.7 1940.9 706.5 1942.0 706.7C1943.1 706.8 1945.8 708.2 1946.9 708.1C1948.0 707.9 1950.8 705.5 1951.9 705.4C1953.0 705.3 1955.8 707.0 1956.9 706.9C1958.0 706.7 1960.8 704.2 1961.9 704.3C1963.0 704.3 1965.8 707.0 1966.8 707.4C1967.9 707.8 1970.7 708.1 1971.8 707.8C1972.9 707.6 1975.7 705.3 1976.8 705.1C1977.9 704.9 1980.7 705.8 1981.8 706.1C1982.9 706.5 1985.7 708.2 1986.8 708.1C1987.8 707.9 1990.6 704.9 1991.7 704.6C1992.8 704.3 1995.6 705.0 1996.7 705.2C1997.8 705.5 2000.6 706.5 2001.7 706.8C2002.8 707.0 2005.6 707.2 2006.7 707.3C2007.8 707.3 2010.5 707.1 2011.6 706.9C2012.7 706.6 2015.5 704.9 2016.6 704.8C2017.7 704.6 2020.5 705.3 2021.6 705.6C2022.7 705.9 2025.5 707.2 2026.6 707.2C2027.7 707.2 2030.4 705.9 2031.5 705.6C2032.6 705.2 2035.4 704.0 2036.5 704.1C2037.6 704.2 2040.4 706.3 2041.5 706.3C2042.6 706.4 2045.4 704.8 2046.5 704.7C2047.6 704.6 2050.3 701.0 2051.4 705.3C2052.5 709.7 2055.9 739.9 2056.4 744.1" fill="none" stroke="#7257e6" stroke-width="3" stroke-linejoin="round" stroke-linecap="round"/><path d="M1738.0 678.5C1738.5 679.7 1741.8 688.1 1742.9 689.3C1744.0 690.5 1746.8 689.7 1747.9 689.6C1749.0 689.5 1751.8 688.3 1752.9 688.2C1754.0 688.2 1756.8 690.0 1757.9 689.3C1759.0 688.6 1761.7 682.0 1762.8 682.1C1763.9 682.2 1766.7 689.2 1767.8 689.9C1768.9 690.7 1771.7 689.5 1772.8 688.9C1773.9 688.4 1776.7 685.1 1777.8 685.0C1778.9 684.9 1781.6 688.0 1782.7 688.0C1783.8 687.9 1786.6 684.4 1787.7 684.6C1788.8 684.8 1791.6 689.5 1792.7 690.0C1793.8 690.6 1796.6 689.8 1797.7 689.7C1798.8 689.5 1801.5 688.7 1802.6 688.7C1803.7 688.6 1806.5 689.3 1807.6 689.4C1808.7 689.5 1811.5 689.5 1812.6 689.5C1813.7 689.4 1816.5 689.3 1817.6 689.3C1818.7 689.3 1821.4 690.0 1822.5 689.5C1823.6 689.1 1826.4 685.0 1827.5 684.9C1828.6 684.8 1831.4 688.3 1832.5 688.8C1833.6 689.4 1836.4 689.8 1837.5 689.8C1838.6 689.9 1841.4 689.1 1842.4 689.1C1843.5 689.0 1846.3 689.5 1847.4 689.4C1848.5 689.3 1851.3 688.6 1852.4 688.5C1853.5 688.4 1856.3 688.6 1857.4 688.7C1858.5 688.7 1861.3 688.9 1862.4 689.0C1863.4 689.1 1866.2 689.2 1867.3 689.2C1868.4 689.3 1871.2 689.1 1872.3 689.1C1873.4 689.0 1876.2 689.0 1877.3 688.9C1878.4 688.8 1881.2 688.1 1882.3 688.2C1883.4 688.3 1886.1 689.8 1887.2 690.0C1888.3 690.2 1891.1 690.1 1892.2 690.0C1893.3 689.9 1896.1 688.8 1897.2 688.8C1898.3 688.7 1901.1 689.7 1902.2 689.7C1903.3 689.6 1906.0 688.4 1907.1 688.3C1908.2 688.2 1911.0 688.5 1912.1 688.6C1913.2 688.7 1916.0 689.1 1917.1 689.1C1918.2 689.1 1921.0 689.0 1922.1 688.9C1923.2 688.8 1925.9 688.5 1927.0 688.0C1928.1 687.4 1930.9 684.0 1932.0 684.0C1933.1 684.0 1935.9 687.5 1937.0 688.0C1938.1 688.6 1940.9 689.0 1942.0 689.0C1943.1 689.0 1945.8 689.2 1946.9 688.3C1948.0 687.3 1950.8 679.9 1951.9 680.1C1953.0 680.3 1955.8 689.0 1956.9 690.0C1958.0 691.0 1960.8 689.3 1961.9 689.2C1963.0 689.2 1965.8 690.0 1966.8 689.8C1967.9 689.7 1970.7 688.2 1971.8 688.1C1972.9 687.9 1975.7 688.4 1976.8 688.5C1977.9 688.5 1980.7 688.8 1981.8 688.8C1982.9 688.9 1985.7 689.1 1986.8 689.1C1987.8 689.1 1990.6 688.6 1991.7 688.6C1992.8 688.7 1995.6 689.0 1996.7 689.1C1997.8 689.2 2000.6 689.9 2001.7 689.4C2002.8 688.9 2005.6 684.6 2006.7 684.5C2007.8 684.5 2010.5 688.1 2011.6 688.7C2012.7 689.3 2015.5 689.8 2016.6 689.9C2017.7 690.0 2020.5 689.5 2021.6 689.4C2022.7 689.2 2025.5 689.0 2026.6 688.9C2027.7 688.8 2030.4 688.8 2031.5 688.7C2032.6 688.7 2035.4 688.7 2036.5 688.4C2037.6 688.0 2040.4 685.2 2041.5 685.2C2042.6 685.2 2045.4 683.3 2046.5 688.4C2047.6 693.4 2050.9 726.3 2051.4 731.0" fill="none" stroke="#dfbdff" stroke-width="3" stroke-linejoin="round" stroke-linecap="round"/><path d="M1742.9 695.3C1743.5 695.3 1746.8 696.3 1747.9 695.6C1749.0 694.9 1751.8 689.4 1752.9 689.3C1754.0 689.3 1756.8 694.2 1757.9 694.8C1759.0 695.5 1761.7 695.7 1762.8 695.4C1763.9 695.1 1766.7 691.9 1767.8 692.0C1768.9 692.2 1771.7 696.3 1772.8 696.5C1773.9 696.7 1776.7 694.1 1777.8 693.9C1778.9 693.7 1781.6 694.7 1782.7 694.9C1783.8 695.1 1786.6 696.0 1787.7 695.4C1788.8 694.8 1791.6 689.3 1792.7 689.3C1793.8 689.2 1796.6 694.4 1797.7 694.7C1798.8 694.9 1801.5 691.5 1802.6 691.6C1803.7 691.7 1806.5 695.1 1807.6 695.4C1808.7 695.8 1811.5 695.1 1812.6 694.6C1813.7 694.2 1816.5 691.7 1817.6 691.4C1818.7 691.0 1821.4 691.3 1822.5 691.6C1823.6 691.9 1826.4 693.7 1827.5 693.9C1828.6 694.0 1831.4 693.1 1832.5 693.0C1833.6 692.9 1836.4 693.0 1837.5 693.0C1838.6 693.0 1841.4 692.3 1842.4 692.7C1843.5 693.1 1846.3 696.5 1847.4 696.7C1848.5 696.8 1851.3 694.1 1852.4 694.0C1853.5 693.9 1856.3 696.2 1857.4 695.7C1858.5 695.2 1861.3 690.0 1862.4 689.7C1863.4 689.4 1866.2 692.8 1867.3 692.9C1868.4 693.1 1871.2 690.6 1872.3 690.9C1873.4 691.1 1876.2 695.0 1877.3 695.0C1878.4 695.0 1881.2 691.7 1882.3 691.2C1883.4 690.6 1886.1 689.6 1887.2 690.1C1888.3 690.5 1891.1 695.4 1892.2 695.4C1893.3 695.4 1896.1 690.7 1897.2 690.2C1898.3 689.8 1901.1 690.9 1902.2 691.0C1903.3 691.1 1906.0 691.3 1907.1 691.2C1908.2 691.1 1911.0 689.9 1912.1 690.4C1913.2 690.9 1916.0 694.9 1917.1 695.6C1918.2 696.3 1921.0 696.9 1922.1 696.7C1923.2 696.5 1925.9 693.9 1927.0 693.9C1928.1 693.9 1930.9 696.7 1932.0 696.5C1933.1 696.3 1935.9 692.1 1937.0 692.2C1938.1 692.2 1940.9 696.3 1942.0 696.6C1943.1 696.9 1945.8 694.7 1946.9 694.6C1948.0 694.6 1950.8 696.3 1951.9 696.0C1953.0 695.7 1955.8 691.9 1956.9 691.8C1958.0 691.8 1960.8 695.3 1961.9 695.6C1963.0 695.8 1965.8 694.3 1966.8 693.9C1967.9 693.6 1970.7 692.4 1971.8 692.4C1972.9 692.4 1975.7 693.4 1976.8 693.8C1977.9 694.3 1980.7 696.4 1981.8 696.6C1982.9 696.7 1985.7 695.3 1986.8 695.4C1987.8 695.4 1990.6 697.2 1991.7 696.8C1992.8 696.5 1995.6 692.7 1996.7 692.3C1997.8 691.8 2000.6 692.2 2001.7 692.6C2002.8 693.0 2005.6 696.0 2006.7 695.8C2007.8 695.7 2010.5 691.8 2011.6 691.3C2012.7 690.8 2015.5 690.7 2016.6 691.3C2017.7 691.9 2020.5 696.2 2021.6 696.6C2022.7 696.9 2025.5 695.2 2026.6 694.6C2027.7 693.9 2030.4 691.3 2031.5 690.7C2032.6 690.2 2035.4 689.3 2036.5 689.6C2037.6 689.9 2040.4 693.7 2041.5 693.8C2042.6 693.9 2045.9 691.2 2046.5 690.9" fill="none" stroke="#dfbdff" stroke-width="2" stroke-linejoin="round" stroke-linecap="round"/><path d="M1728.0 711.3C1728.5 713.5 1731.9 728.6 1733.0 731.0C1734.1 733.5 1736.9 738.0 1738.0 733.6C1739.0 729.3 1741.8 690.5 1742.9 691.6C1744.0 692.8 1746.8 736.2 1747.9 744.1C1749.0 752.1 1752.3 761.7 1752.9 763.8" fill="none" stroke="#5fd3e8" stroke-width="2" stroke-linejoin="round" stroke-linecap="round"/><path d="M1728.0 757.3C1728.5 740.7 1731.9 618.6 1733.0 606.3C1734.1 594.0 1736.9 633.4 1738.0 645.7C1739.0 658.0 1741.8 705.3 1742.9 717.9C1744.0 730.5 1746.8 754.6 1747.9 759.9C1749.0 765.2 1752.3 765.7 1752.9 766.5" fill="none" stroke="#c69cff" stroke-width="2" stroke-linejoin="round" stroke-linecap="round"/><path d="M1728.0 763.8C1728.5 758.8 1731.9 740.3 1733.0 717.9C1734.1 695.5 1736.9 570.5 1738.0 560.4C1739.0 550.3 1741.8 611.6 1742.9 626.0C1744.0 640.4 1746.8 678.6 1747.9 691.6C1749.0 704.6 1751.8 736.1 1752.9 744.1C1754.0 752.2 1757.3 762.8 1757.9 765.1" fill="none" stroke="#a8f6ff" stroke-width="2" stroke-linejoin="round" stroke-linecap="round"/><path d="M1738.0 586.6C1738.5 593.1 1741.8 632.4 1742.9 645.7C1744.0 659.0 1746.8 694.3 1747.9 707.4C1749.0 720.5 1751.8 758.7 1752.9 765.1C1754.0 771.6 1757.3 766.3 1757.9 766.5" fill="none" stroke="#ffc93f" stroke-width="2" stroke-linejoin="round" stroke-linecap="round"/><path d="M1738.0 584.0C1738.5 590.1 1741.8 626.1 1742.9 639.1C1744.0 652.1 1746.8 688.6 1747.9 702.1C1749.0 715.7 1751.8 755.6 1752.9 762.5C1754.0 769.5 1756.8 765.4 1757.9 765.1C1759.0 764.9 1762.3 760.5 1762.8 759.9" fill="none" stroke="#8a6b00" stroke-width="2" stroke-linejoin="round" stroke-linecap="round"/><path d="M1733.0 702.1C1733.5 703.0 1736.9 708.0 1738.0 710.0C1739.0 712.0 1741.8 718.2 1742.9 720.5C1744.0 722.8 1746.8 728.7 1747.9 731.0C1749.0 733.3 1751.8 738.9 1752.9 741.5C1754.0 744.1 1756.8 751.9 1757.9 754.6C1759.0 757.4 1762.3 765.2 1762.8 766.5" fill="none" stroke="#661100" stroke-width="2" stroke-linejoin="round" stroke-linecap="round"/><path d="M1728.0 763.8C1728.5 760.9 1731.9 742.3 1733.0 737.6C1734.1 732.8 1736.9 719.8 1738.0 720.5C1739.0 721.2 1741.8 739.8 1742.9 744.1C1744.0 748.5 1747.4 758.2 1747.9 759.9" fill="none" stroke="#ffcd94" stroke-width="2" stroke-linejoin="round" stroke-linecap="round"/><path d="M1728.4 615.6C1729.0 613.5 1732.3 594.7 1733.3 596.7C1734.4 598.6 1737.0 625.9 1738.2 633.3C1739.4 640.8 1742.9 660.7 1744.4 664.4C1746.0 668.2 1750.8 668.6 1752.2 667.8C1753.7 666.9 1756.2 658.0 1757.8 656.7C1759.4 655.3 1764.5 654.8 1766.7 655.6C1768.9 656.3 1776.0 665.8 1777.8 663.3C1779.6 660.8 1781.8 633.5 1782.9 632.9C1784.0 632.3 1785.7 654.4 1787.8 657.8C1789.9 661.2 1799.9 665.1 1802.2 664.0C1804.5 662.9 1807.7 649.9 1808.9 647.8C1810.1 645.6 1812.4 642.7 1813.3 644.4C1814.3 646.2 1816.3 662.5 1817.8 663.3C1819.2 664.2 1824.7 652.6 1826.7 652.2C1828.6 651.9 1833.8 659.5 1835.6 660.0C1837.3 660.5 1840.0 657.2 1842.2 656.7C1844.4 656.2 1853.2 656.1 1855.6 655.6C1857.9 655.0 1861.9 650.6 1863.3 651.6C1864.8 652.5 1867.3 664.2 1868.9 664.4C1870.5 664.6 1875.8 654.9 1877.8 653.3C1879.7 651.7 1884.7 649.5 1886.7 650.0C1888.6 650.5 1893.6 657.4 1895.6 657.8C1897.5 658.1 1902.5 654.3 1904.4 653.3C1906.4 652.4 1911.4 647.8 1913.3 648.9C1915.3 650.0 1920.0 662.8 1922.2 663.3C1924.4 663.8 1931.5 654.1 1933.3 653.3C1935.2 652.6 1937.8 656.7 1938.9 656.7C1940.0 656.7 1942.0 652.6 1943.3 653.3C1944.7 654.1 1949.5 663.6 1951.1 663.3C1952.7 663.1 1956.1 652.8 1957.8 651.1C1959.5 649.4 1965.0 646.4 1966.7 647.8C1968.4 649.1 1971.6 662.7 1973.3 663.3C1975.0 663.9 1980.5 654.4 1982.2 653.3C1983.9 652.2 1987.7 652.2 1988.9 653.3C1990.1 654.4 1990.9 663.8 1993.3 663.3C1995.8 662.8 2008.2 648.9 2011.1 648.9C2014.0 648.9 2018.3 661.6 2020.0 663.3C2021.7 665.0 2025.4 665.5 2026.7 664.4C2027.9 663.3 2030.1 653.3 2031.1 653.3C2032.1 653.3 2034.3 665.5 2035.6 664.4C2036.8 663.4 2041.0 645.2 2042.2 644.0C2043.4 642.8 2045.6 651.6 2046.7 653.3C2047.8 655.1 2051.1 653.4 2052.2 660.0C2053.3 666.6 2056.2 707.5 2056.7 713.3" fill="none" stroke="#a8f6ff" stroke-width="2" stroke-linejoin="round" stroke-linecap="round"/><path d="M1728.0 462.0C1728.2 460.1 1729.5 448.0 1730.0 445.0C1730.5 442.0 1731.8 431.1 1732.3 435.0C1732.8 438.9 1734.1 457.4 1734.5 480.0C1734.9 502.6 1735.8 614.3 1736.2 640.0C1736.6 665.7 1737.0 706.5 1737.8 713.3C1738.6 720.2 1741.4 706.4 1743.3 702.2C1745.3 698.1 1753.7 677.8 1755.6 675.6C1757.4 673.4 1758.8 682.3 1760.0 682.2C1761.2 682.1 1765.2 674.2 1766.7 674.4C1768.1 674.7 1771.6 681.4 1773.3 684.4C1775.0 687.5 1780.5 701.7 1782.2 702.2C1783.9 702.7 1787.2 691.6 1788.9 688.9C1790.6 686.2 1796.1 677.8 1797.8 677.8C1799.5 677.8 1803.2 688.2 1804.4 688.9C1805.7 689.6 1807.9 683.0 1808.9 684.4C1809.9 685.9 1812.1 702.6 1813.3 702.2C1814.6 701.9 1818.8 681.1 1820.0 681.1C1821.2 681.1 1823.0 703.1 1824.4 702.2C1825.9 701.4 1831.9 674.3 1833.3 673.3C1834.8 672.4 1836.7 693.5 1837.8 693.3C1838.9 693.2 1841.9 673.2 1843.3 672.2C1844.8 671.2 1849.5 681.5 1851.1 684.4C1852.7 687.4 1856.2 698.2 1857.8 698.9C1859.4 699.6 1864.3 692.7 1865.6 691.1C1866.8 689.5 1868.1 688.7 1868.9 684.4C1869.7 680.2 1871.9 652.2 1872.9 652.2C1873.9 652.2 1876.8 680.4 1877.8 684.4C1878.8 688.5 1881.1 689.7 1882.2 688.9C1883.3 688.0 1886.4 676.4 1887.8 676.7C1889.1 676.9 1892.9 689.5 1894.4 691.1C1896.0 692.7 1900.4 691.6 1902.2 691.1C1904.1 690.6 1909.2 687.0 1911.1 686.7C1913.1 686.3 1918.2 689.6 1920.0 687.8C1921.8 685.9 1926.4 669.4 1927.8 670.0C1929.1 670.6 1930.8 691.4 1932.2 693.3C1933.7 695.3 1939.5 687.8 1941.1 687.8C1942.7 687.8 1945.1 693.8 1946.7 693.3C1948.3 692.8 1953.6 684.6 1955.6 683.3C1957.5 682.1 1962.9 681.1 1964.4 682.2C1966.0 683.3 1968.8 693.1 1970.0 693.3C1971.2 693.6 1974.2 684.3 1975.6 684.4C1976.9 684.6 1980.9 695.7 1982.2 694.4C1983.6 693.2 1986.6 673.5 1987.8 673.3C1989.0 673.2 1991.3 692.4 1993.3 693.3C1995.4 694.3 2004.2 683.0 2006.7 682.2C2009.1 681.5 2014.1 686.4 2015.6 686.7C2017.0 686.9 2018.8 683.2 2020.0 684.4C2021.2 685.7 2025.4 697.4 2026.7 697.8C2027.9 698.1 2029.9 689.6 2031.1 687.8C2032.3 685.9 2036.1 682.8 2037.8 681.1C2039.5 679.4 2045.2 671.9 2046.7 672.2C2048.1 672.6 2050.1 677.5 2051.1 684.4C2052.1 691.4 2055.1 729.9 2055.6 735.6" fill="none" stroke="#7257e6" stroke-width="2" stroke-linejoin="round" stroke-linecap="round"/><path d="M1738.0 511.9C1738.2 515.3 1739.3 536.6 1739.7 542.4C1740.1 548.2 1740.2 562.4 1741.7 564.7C1743.2 567.0 1750.5 564.2 1753.1 563.5C1755.7 562.8 1763.4 559.6 1765.2 558.6C1767.1 557.6 1768.8 555.4 1770.1 554.6C1771.5 553.8 1776.0 550.9 1777.4 551.3C1778.9 551.8 1782.4 555.2 1783.5 558.6C1784.6 562.0 1786.5 581.7 1787.6 582.2C1788.7 582.6 1792.3 564.6 1793.7 562.7C1795.0 560.8 1798.4 565.2 1799.8 564.7C1801.1 564.3 1804.3 560.4 1805.8 558.6C1807.4 556.8 1812.2 548.9 1814.0 548.5C1815.7 548.0 1820.3 553.1 1822.1 554.6C1823.9 556.0 1828.2 561.8 1830.2 561.9C1832.2 562.0 1838.6 555.7 1840.3 555.4C1842.1 555.0 1845.0 558.6 1846.4 558.6C1847.9 558.6 1852.5 553.3 1853.7 555.4C1854.9 557.5 1856.4 577.3 1857.4 577.7C1858.4 578.1 1861.5 564.6 1862.7 558.6C1863.8 552.6 1866.8 520.8 1868.0 523.3C1869.1 525.8 1871.8 577.1 1872.8 580.9C1873.9 584.8 1876.6 560.4 1877.7 558.6C1878.8 556.8 1881.5 564.0 1883.0 564.7C1884.4 565.4 1889.3 565.7 1891.1 564.7C1892.9 563.7 1898.0 553.2 1899.2 555.4C1900.5 557.5 1901.6 584.3 1902.5 584.2C1903.3 584.1 1906.1 558.3 1907.3 554.6C1908.5 550.8 1912.1 550.5 1913.4 550.5C1914.8 550.5 1918.4 552.3 1919.5 554.6C1920.6 556.8 1922.7 566.9 1923.6 570.8C1924.5 574.7 1926.5 590.9 1927.6 590.3C1928.7 589.6 1932.4 569.1 1933.7 564.7C1935.1 560.3 1938.5 552.1 1939.8 550.5C1941.1 548.8 1944.6 545.8 1945.9 549.7C1947.1 553.6 1950.1 585.5 1951.2 586.2C1952.3 587.0 1954.8 559.2 1956.0 556.6C1957.2 554.0 1961.0 561.8 1962.1 562.7C1963.2 563.6 1965.2 565.6 1966.2 564.7C1967.2 563.8 1970.3 553.1 1971.5 554.6C1972.7 556.0 1976.1 577.9 1977.2 578.1C1978.2 578.3 1980.2 558.8 1981.2 556.6C1982.2 554.4 1985.0 557.9 1986.5 557.8C1988.0 557.7 1993.0 552.2 1994.6 555.4C1996.3 558.6 2000.2 587.5 2001.5 587.0C2002.8 586.6 2005.5 555.2 2006.8 551.3C2008.0 547.4 2011.5 550.5 2012.9 551.3C2014.2 552.1 2017.4 558.2 2019.0 558.6C2020.5 559.1 2025.7 552.6 2027.1 555.4C2028.4 558.2 2030.0 584.6 2031.1 584.2C2032.3 583.7 2035.9 554.1 2037.2 551.3C2038.6 548.5 2041.8 558.3 2043.3 558.6C2044.9 559.0 2050.4 553.2 2051.4 554.6C2052.5 555.9 2052.7 564.5 2053.1 570.8C2053.4 577.0 2054.2 601.1 2054.7 611.4C2055.2 621.7 2057.2 658.4 2057.5 664.2" fill="none" stroke="#2f1f99" stroke-width="2" stroke-linejoin="round" stroke-linecap="round"/><path d="M1738.0 578.7C1738.5 578.0 1741.8 572.1 1742.9 572.2C1744.0 572.3 1746.8 579.4 1747.9 579.4C1749.0 579.4 1751.8 572.2 1752.9 572.2C1754.0 572.2 1756.8 579.4 1757.9 579.4C1759.0 579.4 1761.7 572.2 1762.8 572.2C1763.9 572.2 1766.7 579.4 1767.8 579.4C1768.9 579.4 1771.7 572.2 1772.8 572.2C1773.9 572.2 1776.7 579.4 1777.8 579.4C1778.9 579.4 1781.6 572.2 1782.7 572.2C1783.8 572.2 1786.6 579.4 1787.7 579.4C1788.8 579.4 1791.6 572.2 1792.7 572.2C1793.8 572.2 1796.6 579.4 1797.7 579.4C1798.8 579.4 1801.5 572.2 1802.6 572.2C1803.7 572.2 1806.5 579.4 1807.6 579.4C1808.7 579.4 1811.5 572.2 1812.6 572.2C1813.7 572.2 1816.5 579.4 1817.6 579.4C1818.7 579.4 1821.4 572.2 1822.5 572.2C1823.6 572.2 1826.4 579.4 1827.5 579.4C1828.6 579.4 1831.4 572.2 1832.5 572.2C1833.6 572.2 1836.4 579.4 1837.5 579.4C1838.6 579.4 1841.4 572.2 1842.4 572.2C1843.5 572.2 1846.3 579.4 1847.4 579.4C1848.5 579.4 1851.3 572.2 1852.4 572.2C1853.5 572.2 1856.3 579.4 1857.4 579.4C1858.5 579.4 1861.3 572.2 1862.4 572.2C1863.4 572.2 1866.2 579.4 1867.3 579.4C1868.4 579.4 1871.2 572.2 1872.3 572.2C1873.4 572.2 1876.2 579.4 1877.3 579.4C1878.4 579.4 1881.2 572.2 1882.3 572.2C1883.4 572.2 1886.1 579.4 1887.2 579.4C1888.3 579.4 1891.1 572.2 1892.2 572.2C1893.3 572.2 1896.1 579.4 1897.2 579.4C1898.3 579.4 1901.1 572.2 1902.2 572.2C1903.3 572.2 1906.0 579.4 1907.1 579.4C1908.2 579.4 1911.0 572.2 1912.1 572.2C1913.2 572.2 1916.0 579.4 1917.1 579.4C1918.2 579.4 1921.0 572.2 1922.1 572.2C1923.2 572.2 1925.9 579.4 1927.0 579.4C1928.1 579.4 1930.9 572.2 1932.0 572.2C1933.1 572.2 1935.9 579.4 1937.0 579.4C1938.1 579.4 1940.9 572.2 1942.0 572.2C1943.1 572.2 1945.8 579.4 1946.9 579.4C1948.0 579.4 1950.8 572.2 1951.9 572.2C1953.0 572.2 1955.8 579.4 1956.9 579.4C1958.0 579.4 1960.8 572.2 1961.9 572.2C1963.0 572.2 1965.8 579.4 1966.8 579.4C1967.9 579.4 1970.7 572.2 1971.8 572.2C1972.9 572.2 1975.7 579.4 1976.8 579.4C1977.9 579.4 1980.7 572.2 1981.8 572.2C1982.9 572.2 1985.7 579.4 1986.8 579.4C1987.8 579.4 1990.6 572.2 1991.7 572.2C1992.8 572.2 1995.6 579.4 1996.7 579.4C1997.8 579.4 2000.6 572.2 2001.7 572.2C2002.8 572.2 2005.6 579.4 2006.7 579.4C2007.8 579.4 2010.5 572.2 2011.6 572.2C2012.7 572.2 2015.5 579.4 2016.6 579.4C2017.7 579.4 2020.5 572.2 2021.6 572.2C2022.7 572.2 2025.5 579.4 2026.6 579.4C2027.7 579.4 2030.4 572.2 2031.5 572.2C2032.6 572.2 2035.4 579.4 2036.5 579.4C2037.6 579.4 2040.4 572.8 2041.5 572.2C2042.6 571.5 2045.4 573.2 2046.5 573.5C2047.6 573.8 2050.7 573.0 2051.4 574.8C2052.2 576.6 2052.6 585.0 2053.0 590.0C2053.4 595.0 2054.5 611.9 2055.0 620.0C2055.5 628.1 2057.2 659.2 2057.5 664.0" fill="none" stroke="#f0803c" stroke-width="2" stroke-linejoin="round" stroke-linecap="round"/></svg>
<div class="t " style="left:219px;top:761.7px;font-size:12px;line-height:16px;color:#111;width:40px;text-align:right;letter-spacing:.3px;">0</div>
<div class="t " style="left:219px;top:728.882px;font-size:12px;line-height:16px;color:#111;width:40px;text-align:right;letter-spacing:.3px;">25</div>
<div class="t " style="left:219px;top:696.065px;font-size:12px;line-height:16px;color:#111;width:40px;text-align:right;letter-spacing:.3px;">50</div>
<div class="t " style="left:219px;top:663.247px;font-size:12px;line-height:16px;color:#111;width:40px;text-align:right;letter-spacing:.3px;">75</div>
<div class="t " style="left:219px;top:630.43px;font-size:12px;line-height:16px;color:#111;width:40px;text-align:right;letter-spacing:.3px;">100</div>
<div class="t " style="left:219px;top:597.612px;font-size:12px;line-height:16px;color:#111;width:40px;text-align:right;letter-spacing:.3px;">125</div>
<div class="t " style="left:219px;top:564.795px;font-size:12px;line-height:16px;color:#111;width:40px;text-align:right;letter-spacing:.3px;">150</div>
<div class="t " style="left:219px;top:531.977px;font-size:12px;line-height:16px;color:#111;width:40px;text-align:right;letter-spacing:.3px;">175</div>
<div class="t " style="left:219px;top:499.16px;font-size:12px;line-height:16px;color:#111;width:40px;text-align:right;letter-spacing:.3px;">200</div>
<div class="t " style="left:219px;top:466.342px;font-size:12px;line-height:16px;color:#111;width:40px;text-align:right;letter-spacing:.3px;">225</div>
<div class="t " style="left:219px;top:433.525px;font-size:12px;line-height:16px;color:#111;width:40px;text-align:right;letter-spacing:.3px;">250</div>
<div class="t " style="left:219px;top:400.707px;font-size:12px;line-height:16px;color:#111;width:40px;text-align:right;letter-spacing:.3px;">275</div>
<div class="t " style="left:245.3px;top:777px;font-size:12px;line-height:16px;color:#111;width:60px;text-align:center;">10:30</div>
<div class="t " style="left:295.06px;top:777px;font-size:12px;line-height:16px;color:#111;width:60px;text-align:center;">10:40</div>
<div class="t " style="left:344.82px;top:777px;font-size:12px;line-height:16px;color:#111;width:60px;text-align:center;">10:50</div>
<div class="t " style="left:394.58000000000004px;top:777px;font-size:12px;line-height:16px;color:#111;width:60px;text-align:center;">11:00</div>
<div class="t " style="left:444.34000000000003px;top:777px;font-size:12px;line-height:16px;color:#111;width:60px;text-align:center;">11:10</div>
<div class="t " style="left:494.1px;top:777px;font-size:12px;line-height:16px;color:#111;width:60px;text-align:center;">11:20</div>
<div class="t " style="left:543.86px;top:777px;font-size:12px;line-height:16px;color:#111;width:60px;text-align:center;">11:30</div>
<div class="t " style="left:593.62px;top:777px;font-size:12px;line-height:16px;color:#111;width:60px;text-align:center;">11:40</div>
<div class="t " style="left:643.38px;top:777px;font-size:12px;line-height:16px;color:#111;width:60px;text-align:center;">11:50</div>
<div class="t " style="left:693.14px;top:777px;font-size:12px;line-height:16px;color:#111;width:60px;text-align:center;">12:00</div>
<div class="t " style="left:742.9px;top:777px;font-size:12px;line-height:16px;color:#111;width:60px;text-align:center;">12:10</div>
<div class="t " style="left:792.6600000000001px;top:777px;font-size:12px;line-height:16px;color:#111;width:60px;text-align:center;">12:20</div>
<div class="t " style="left:842.4200000000001px;top:777px;font-size:12px;line-height:16px;color:#111;width:60px;text-align:center;">12:30</div>
<div class="t " style="left:892.1800000000001px;top:777px;font-size:12px;line-height:16px;color:#111;width:60px;text-align:center;">12:40</div>
<div class="t " style="left:941.94px;top:777px;font-size:12px;line-height:16px;color:#111;width:60px;text-align:center;">12:50</div>
<div class="t " style="left:991.7px;top:777px;font-size:12px;line-height:16px;color:#111;width:60px;text-align:center;">13:00</div>
<div class="t " style="left:1041.46px;top:777px;font-size:12px;line-height:16px;color:#111;width:60px;text-align:center;">13:10</div>
<div class="t " style="left:1091.22px;top:777px;font-size:12px;line-height:16px;color:#111;width:60px;text-align:center;">13:20</div>
<div class="t " style="left:1140.98px;top:777px;font-size:12px;line-height:16px;color:#111;width:60px;text-align:center;">13:30</div>
<div class="t " style="left:1190.74px;top:777px;font-size:12px;line-height:16px;color:#111;width:60px;text-align:center;">13:40</div>
<div class="t " style="left:1240.5px;top:777px;font-size:12px;line-height:16px;color:#111;width:60px;text-align:center;">13:50</div>
<div class="t " style="left:1290.26px;top:777px;font-size:12px;line-height:16px;color:#111;width:60px;text-align:center;">14:00</div>
<div class="t " style="left:1340.02px;top:777px;font-size:12px;line-height:16px;color:#111;width:60px;text-align:center;">14:10</div>
<div class="t " style="left:1389.78px;top:777px;font-size:12px;line-height:16px;color:#111;width:60px;text-align:center;">14:20</div>
<div class="t " style="left:1439.54px;top:777px;font-size:12px;line-height:16px;color:#111;width:60px;text-align:center;">14:30</div>
<div class="t " style="left:1489.3px;top:777px;font-size:12px;line-height:16px;color:#111;width:60px;text-align:center;">14:40</div>
<div class="t " style="left:1539.06px;top:777px;font-size:12px;line-height:16px;color:#111;width:60px;text-align:center;">14:50</div>
<div class="t " style="left:1588.82px;top:777px;font-size:12px;line-height:16px;color:#111;width:60px;text-align:center;">15:00</div>
<div class="t " style="left:1638.58px;top:777px;font-size:12px;line-height:16px;color:#111;width:60px;text-align:center;">15:10</div>
<div class="t " style="left:1688.34px;top:777px;font-size:12px;line-height:16px;color:#111;width:60px;text-align:center;">15:20</div>
<div class="t " style="left:1738.1px;top:777px;font-size:12px;line-height:16px;color:#111;width:60px;text-align:center;">15:30</div>
<div class="t " style="left:1787.86px;top:777px;font-size:12px;line-height:16px;color:#111;width:60px;text-align:center;">15:40</div>
<div class="t " style="left:1837.62px;top:777px;font-size:12px;line-height:16px;color:#111;width:60px;text-align:center;">15:50</div>
<div class="t " style="left:1887.3799999999999px;top:777px;font-size:12px;line-height:16px;color:#111;width:60px;text-align:center;">16:00</div>
<div class="t " style="left:1937.1399999999999px;top:777px;font-size:12px;line-height:16px;color:#111;width:60px;text-align:center;">16:10</div>
<div class="t " style="left:2000px;top:777px;font-size:12px;line-height:16px;color:#111;width:60px;text-align:right;">16:20</div>
<div class="r" style="left:253px;top:802px;width:14px;height:4px;background:#1d5fe0;border-radius:1px;"></div>
<div class="t " style="left:275px;top:793px;font-size:12px;line-height:16px;color:#111;letter-spacing:0.821px;">Go-http-client/2.0</div>
<div class="r" style="left:391px;top:802px;width:14px;height:4px;background:#5fd3e8;border-radius:1px;"></div>
<div class="t " style="left:413.2px;top:793px;font-size:12px;line-height:16px;color:#111;letter-spacing:0.386px;">kubelet/v1.32.2 (linux/amd64) kubernetes/520ea9f</div>
<div class="r" style="left:708px;top:802px;width:14px;height:4px;background:#36b37e;border-radius:1px;"></div>
<div class="t " style="left:730.4px;top:793px;font-size:12px;line-height:16px;color:#111;letter-spacing:0.409px;">agent/v0.0.0 (linux/amd64) kubernetes/$Format</div>
<div class="r" style="left:1012px;top:802px;width:14px;height:4px;background:#ffc93f;border-radius:1px;"></div>
<div class="t " style="left:1033.5px;top:793px;font-size:12px;line-height:16px;color:#111;letter-spacing:0.456px;">monitor-agent/v0.0.0 (linux/amd64) kubernetes/$Format</div>
<div class="r" style="left:1365px;top:802px;width:14px;height:4px;background:#f0803c;border-radius:1px;"></div>
<div class="t " style="left:1387px;top:793px;font-size:12px;line-height:16px;color:#111;letter-spacing:0.503px;">tke-eni-agent/v0.0.0 (linux/amd64) kubernetes/$Format</div>
<div class="r" style="left:253px;top:820px;width:14px;height:4px;background:#ff8fba;border-radius:1px;"></div>
<div class="t " style="left:275px;top:811px;font-size:12px;line-height:16px;color:#111;letter-spacing:0.438px;">csi-snapshotter/v0.0.0 (linux/amd64) kubernetes/$Format</div>
<div class="r" style="left:614px;top:820px;width:14px;height:4px;background:#7257e6;border-radius:1px;"></div>
<div class="t " style="left:635.8px;top:811px;font-size:12px;line-height:16px;color:#111;letter-spacing:0.385px;">kube-apiserver/v1.32.2 (linux/amd64) kubernetes/520ea9f</div>
<div class="r" style="left:975px;top:820px;width:14px;height:4px;background:#dfbdff;border-radius:1px;"></div>
<div class="t " style="left:996.8px;top:811px;font-size:12px;line-height:16px;color:#111;letter-spacing:0.431px;">standalone-metrics/v0.0.0 (linux/amd64) kubernetes/$Format</div>
<div class="r" style="left:1356px;top:820px;width:14px;height:4px;background:#80aaf5;border-radius:1px;"></div>
<div class="t " style="left:1377.8px;top:811px;font-size:12px;line-height:16px;color:#111;letter-spacing:0.466px;">log-agent/v0.0.0 (linux/amd64) kubernetes/$Format</div>
<div class="r" style="left:1683px;top:820px;width:14px;height:4px;background:#a8f6ff;border-radius:1px;"></div>
<div class="t " style="left:1705px;top:811px;font-size:12px;line-height:16px;color:#111;letter-spacing:0.404px;">external-provisioner/v0.0.0 (linux/amd64) kubernetes/$Format</div>
<div class="r" style="left:253px;top:837px;width:14px;height:4px;background:#85eac4;border-radius:1px;"></div>
<div class="t " style="left:275px;top:828.5px;font-size:12px;line-height:16px;color:#111;letter-spacing:0.429px;">snapshot-controller/v0.0.0 (linux/amd64) kubernetes/$Format</div>
<div class="r" style="left:636px;top:837px;width:14px;height:4px;background:#ffeea6;border-radius:1px;"></div>
<div class="t " style="left:657.3px;top:828.5px;font-size:12px;line-height:16px;color:#111;letter-spacing:0.423px;">Prometheus/HEAD-370b3b0</div>
<div class="r" style="left:829px;top:837px;width:14px;height:4px;background:#ffcd94;border-radius:1px;"></div>
<div class="t " style="left:851px;top:828.5px;font-size:12px;line-height:16px;color:#111;letter-spacing:0.538px;">Go-http-client/1.1</div>
<div class="r" style="left:963px;top:837px;width:14px;height:4px;background:#ffc7dd;border-radius:1px;"></div>
<div class="t " style="left:984.9px;top:828.5px;font-size:12px;line-height:16px;color:#111;letter-spacing:0.517px;">tke-platform-api/v0.0.0 (linux/amd64) kubernetes/$Format</div>
<div class="r" style="left:253px;top:856px;width:14px;height:4px;background:#c69cff;border-radius:1px;"></div>
<div class="t " style="left:275px;top:847px;font-size:12px;line-height:16px;color:#111;letter-spacing:0.312px;">gatekeeper/devel (12e632545876fd1c7e0fb27e14c94ea351020db3) (linux/amd64) 12e632545876fd1c7e0fb27e14c94ea351020db3/2024-06-19T12:15:54Z, opa/v0.57.1, frameworks/v0.0.0-20231030230613-2e0cb3d68575</div>
<div class="r" style="left:1528px;top:856px;width:14px;height:4px;background:#f3defc;border-radius:1px;"></div>
<div class="t " style="left:1549.5px;top:847px;font-size:12px;line-height:16px;color:#111;letter-spacing:0.439px;">csi-resizer/v0.0.0 (linux/amd64) kubernetes/$Format</div>
<div class="r" style="left:1859px;top:856px;width:14px;height:4px;background:#001f99;border-radius:1px;"></div>
<div class="t " style="left:1881.1px;top:847px;font-size:12px;line-height:16px;color:#111;letter-spacing:0.870px;">tke-cloud-gw</div>
<div class="r" style="left:253px;top:874px;width:14px;height:4px;background:#0b7a85;border-radius:1px;"></div>
<div class="t " style="left:275px;top:865px;font-size:12px;line-height:16px;color:#111;letter-spacing:0.480px;">csi-cos/v0.0.0 (linux/amd64) kubernetes/$Format</div>
<div class="r" style="left:567px;top:874px;width:14px;height:4px;background:#00361f;border-radius:1px;"></div>
<div class="t " style="left:589.1px;top:865px;font-size:12px;line-height:16px;color:#111;letter-spacing:0.600px;">add-pod-eni-ip-limit-webhook/v0.0.0 (linux/amd64) kubernetes/$Format</div>
<div class="r" style="left:1017px;top:874px;width:14px;height:4px;background:#8a6b00;border-radius:1px;"></div>
<div class="t " style="left:1039px;top:865px;font-size:12px;line-height:16px;color:#111;letter-spacing:0.475px;">hpa-metrics-server/v0.0.0 (linux/amd64) kubernetes/$Format</div>
<div class="r" style="left:1399px;top:874px;width:14px;height:4px;background:#661100;border-radius:1px;"></div>
<div class="t " style="left:1421.2px;top:865px;font-size:12px;line-height:16px;color:#111;letter-spacing:0.471px;">kube-state-metrics/v2.15.0 (linux/amd64) kubernetes/</div>
<div class="r" style="left:253px;top:892px;width:14px;height:4px;background:#a83e6b;border-radius:1px;"></div>
<div class="t " style="left:275px;top:883px;font-size:12px;line-height:16px;color:#111;letter-spacing:0.411px;">kube-controller-manager/v1.32.2 (linux/amd64) kubernetes/520ea9f/system:serviceaccount:kube-system:resourcequota-controller</div>
<div class="r" style="left:1024px;top:892px;width:14px;height:4px;background:#2f1f99;border-radius:1px;"></div>
<div class="t " style="left:1045.7px;top:883px;font-size:12px;line-height:16px;color:#111;letter-spacing:0.432px;">kube-controller-manager/v1.32.2 (linux/amd64) kubernetes/520ea9f/system:serviceaccount:kube-system:horizontal-pod-autoscaler</div>
<div class="r" style="left:253px;top:910px;width:14px;height:4px;background:#a680c4;border-radius:1px;"></div>
<div class="t " style="left:275px;top:901px;font-size:12px;line-height:16px;color:#111;letter-spacing:0.407px;">operator/v0.0.0 (linux/amd64) kubernetes/$Format</div>
<div class="r" style="left:572px;top:910px;width:14px;height:4px;background:#1d5fe0;border-radius:1px;"></div>
<div class="t " style="left:594.3px;top:901px;font-size:12px;line-height:16px;color:#111;letter-spacing:0.156px;">vm_promscrape</div>
<div class="r" style="left:692px;top:910px;width:14px;height:4px;background:#5fd3e8;border-radius:1px;"></div>
<div class="t " style="left:714.1px;top:901px;font-size:12px;line-height:16px;color:#111;letter-spacing:0.442px;">external-attacher/v0.0.0 (linux/amd64) kubernetes/$Format</div>
<div class="r" style="left:1062px;top:910px;width:14px;height:4px;background:#36b37e;border-radius:1px;"></div>
<div class="t " style="left:1083.9px;top:901px;font-size:12px;line-height:16px;color:#111;letter-spacing:0.435px;">kube-controller-manager/v1.32.2 (linux/amd64) kubernetes/520ea9f/system:serviceaccount:kube-system:generic-garbage-collector</div>
<div class="r" style="left:253px;top:928px;width:14px;height:4px;background:#ffc93f;border-radius:1px;"></div>
<div class="t " style="left:275px;top:919px;font-size:12px;line-height:16px;color:#111;letter-spacing:0.409px;">controller/v0.0.0 (linux/amd64) kubernetes/$Format</div>
<div class="r" style="left:577px;top:928px;width:14px;height:4px;background:#f0803c;border-radius:1px;"></div>
<div class="t " style="left:599.1px;top:919px;font-size:12px;line-height:16px;color:#111;letter-spacing:0.455px;">event-monitor/v0.0.0 (linux/amd64) kubernetes/$Format</div>
<div class="r" style="left:929px;top:928px;width:14px;height:4px;background:#ff8fba;border-radius:1px;"></div>
<div class="t " style="left:951.1px;top:919px;font-size:12px;line-height:16px;color:#111;letter-spacing:0.427px;">cls-provisioner/v0.0.0 (linux/amd64) kubernetes/$Format</div>
<div class="r" style="left:1285px;top:928px;width:14px;height:4px;background:#7257e6;border-radius:1px;"></div>
<div class="t " style="left:1306.9px;top:919px;font-size:12px;line-height:16px;color:#111;letter-spacing:0.386px;">manager/v0.0.0 (linux/amd64) kubernetes/$Format</div>
<div class="r" style="left:253px;top:946px;width:14px;height:4px;background:#dfbdff;border-radius:1px;"></div>
<div class="t " style="left:275px;top:937px;font-size:12px;line-height:16px;color:#111;letter-spacing:0.415px;">tencent-cloud-controller-manager/v1.1.11 (linux/amd64) kubernetes/76e4962/leader-election</div>
<div class="r" style="left:811px;top:946px;width:14px;height:4px;background:#80aaf5;border-radius:1px;"></div>
<div class="t " style="left:833.2px;top:937px;font-size:12px;line-height:16px;color:#111;letter-spacing:0.399px;">coredns/v0.0.0 (linux/amd64) kubernetes/$Format</div>
<div class="r" style="left:1127px;top:946px;width:14px;height:4px;background:#a8f6ff;border-radius:1px;"></div>
<div class="t " style="left:1149.6px;top:937px;font-size:12px;line-height:16px;color:#111;letter-spacing:0.469px;">tke-controller-manager/v0.0.0 (linux/amd64) kubernetes/$Format</div>
<div class="r" style="left:1532px;top:946px;width:14px;height:4px;background:#85eac4;border-radius:1px;"></div>
<div class="t " style="left:1554px;top:937px;font-size:12px;line-height:16px;color:#111;letter-spacing:0.427px;">metrics-server/v0.5.1 (linux/amd64) kubernetes/327f689</div>
<div class="r" style="left:253px;top:964px;width:14px;height:4px;background:#ffeea6;border-radius:1px;"></div>
<div class="t " style="left:275px;top:955px;font-size:12px;line-height:16px;color:#111;letter-spacing:0.462px;">kube-proxy-bin/v1.32.2 (linux/amd64) kubernetes/cadc7fd</div>
<div class="r" style="left:616px;top:964px;width:14px;height:4px;background:#ffcd94;border-radius:1px;"></div>
<div class="t " style="left:638px;top:955px;font-size:12px;line-height:16px;color:#111;letter-spacing:0.460px;">scrape-monitor/v0.0.0 (linux/amd64) kubernetes/$Format</div>
<div class="r" style="left:976px;top:964px;width:14px;height:4px;background:#ffc7dd;border-radius:1px;"></div>
<div class="t " style="left:997.5px;top:955px;font-size:12px;line-height:16px;color:#111;letter-spacing:0.457px;">quota-controller/v0.0.0 (linux/amd64) kubernetes/$Format</div>
<div class="r" style="left:1339px;top:964px;width:14px;height:4px;background:#c69cff;border-radius:1px;"></div>
<div class="t " style="left:1361px;top:955px;font-size:12px;line-height:16px;color:#111;letter-spacing:0.413px;">nightsWatch/v0.0.0 (linux/amd64) kubernetes/$Format</div>
<div class="r" style="left:253px;top:982px;width:14px;height:4px;background:#f3defc;border-radius:1px;"></div>
<div class="t " style="left:275px;top:973px;font-size:12px;line-height:16px;color:#111;letter-spacing:0.479px;">kube-controller-manager/v1.32.2 (linux/amd64) kubernetes/520ea9f/metadata-informers</div>
<div class="r" style="left:791px;top:982px;width:14px;height:4px;background:#001f99;border-radius:1px;"></div>
<div class="t " style="left:813.1px;top:973px;font-size:12px;line-height:16px;color:#111;letter-spacing:0.415px;">tencent-cloud-controller-manager/v1.1.11 (linux/amd64) kubernetes/76e4962/shared-informers</div>
<div class="r" style="left:1361px;top:982px;width:14px;height:4px;background:#0b7a85;border-radius:1px;"></div>
<div class="t " style="left:1383.7px;top:973px;font-size:12px;line-height:16px;color:#111;letter-spacing:0.473px;">tke-operator/v0.0.0 (linux/amd64) kubernetes/$Format</div>
<div class="r" style="left:1705px;top:982px;width:14px;height:4px;background:#00361f;border-radius:1px;"></div>
<div class="t " style="left:1727.2px;top:973px;font-size:12px;line-height:16px;color:#111;letter-spacing:0.402px;">nodeStat/v0.0.0 (linux/amd64) kubernetes/$Format</div>
<div class="r" style="left:253px;top:1000px;width:14px;height:4px;background:#8a6b00;border-radius:1px;"></div>
<div class="t " style="left:275px;top:991px;font-size:12px;line-height:16px;color:#111;letter-spacing:0.471px;">kube-controller-manager/v1.32.2 (linux/amd64) kubernetes/520ea9f/shared-informers</div>
<div class="r" style="left:776px;top:1000px;width:14px;height:4px;background:#661100;border-radius:1px;"></div>
<div class="t " style="left:797.6px;top:991px;font-size:12px;line-height:16px;color:#111;letter-spacing:0.401px;">nodeWatch/v0.0.0 (linux/amd64) kubernetes/$Format</div>
<div class="r" style="left:1110px;top:1000px;width:14px;height:4px;background:#a83e6b;border-radius:1px;"></div>
<div class="t " style="left:1132.2px;top:991px;font-size:12px;line-height:16px;color:#111;letter-spacing:0.464px;">kube-controller-manager/v1.32.2 (linux/amd64) kubernetes/520ea9f/controller-discovery</div>
<div class="r" style="left:1648px;top:1000px;width:14px;height:4px;background:#2f1f99;border-radius:1px;"></div>
<div class="t " style="left:1669.7px;top:991px;font-size:12px;line-height:16px;color:#111;letter-spacing:0.437px;">cluster-autoscaler/v0.0.0 (linux/amd64) kubernetes/$Format</div>
<div class="r" style="left:240px;top:1008px;width:1840px;height:4px;overflow:hidden">
<div class="t" style="left:35px;top:-1px;font-size:12px;line-height:16px;color:#111;letter-spacing:.45px">kube-controller-manager/v1.32.2 (linux/amd64) kubernetes/520ea9f/leader-election &nbsp; &nbsp; &nbsp; kube-controller-manager/v1.32.2 (linux/amd64) kubernetes/520ea9f &nbsp; &nbsp; &nbsp; tke-monitor-agent/v0.0.0 (linux/amd64) kubernetes/$Format &nbsp; &nbsp; &nbsp; kube-scheduler/v1.32.2 (linux/amd64) kubernetes/520ea9f/scheduler</div>
</div>
<div class="r" style="left:2089px;top:345px;width:1px;height:688px;background:#e3e7ef;"></div>
<div class="r" style="left:2102px;top:357px;width:375px;height:34px;background:#f0f2f7;border-radius:3px;"></div>
<div class="r" style="left:2106px;top:361px;width:184px;height:26px;background:#fff;border-radius:2px;"></div>
<div class="t " style="left:2106px;top:363.5px;font-size:12px;line-height:20px;color:#000;width:184px;text-align:center;"><i>图</i><i>表</i><i>配</i><i>置</i></div>
<div class="t " style="left:2290px;top:363.5px;font-size:12px;line-height:20px;color:#222;width:184px;text-align:center;"><i>图</i><i>表</i><i>推</i><i>荐</i></div>
<div class="r" style="left:2090px;top:403px;width:399px;height:1px;background:#e3e7ef;"></div>
<svg class="r" style="left:2107px;top:422px;" width="8" height="6" viewBox="0 0 8 6"><path d="M0 0h8L4 6z" fill="#111"/></svg>
<div class="t " style="left:2123.8px;top:414.5px;font-size:12px;line-height:20px;color:#000;"><i>图</i><i>表</i><i>类</i><i>型</i></div>
<div class="r" style="left:2110px;top:446px;width:64px;height:64px;background:#fff;border:1px solid #dfe3ed;"></div>
<svg class="r" style="left:2130px;top:452px;" width="24" height="24" viewBox="0 0 24 24"><rect x="0" y="1" width="24" height="5" fill="#7d88a3"/><g fill="#c9cfdc"><rect x="0" y="7.5" width="7" height="6.5"/><rect x="8.5" y="7.5" width="7" height="6.5"/><rect x="17" y="7.5" width="7" height="6.5"/><rect x="0" y="15.5" width="7" height="7"/><rect x="8.5" y="15.5" width="7" height="7"/></g><rect x="17" y="15.5" width="7" height="7" fill="#3a3d45"/></svg>
<div class="t " style="left:2110px;top:479.5px;font-size:12px;line-height:20px;color:#4d5563;width:64px;text-align:center;"><i>表</i><i>格</i></div>
<div class="r" style="left:2184px;top:446px;width:64px;height:64px;background:#fff;border:1px solid #0b57e0;"></div>
<svg class="r" style="left:2204px;top:452px;" width="24" height="24" viewBox="0 0 24 24"><defs><linearGradient id="ta" x1="0" y1="0" x2="0" y2="1"><stop offset="0" stop-color="#b3ccff"/><stop offset="1" stop-color="#f4f7ff"/></linearGradient></defs><path d="M1 16.5L8 15 16.5 2.5 24 7.5V21H1z" fill="url(#ta)"/><path d="M1 2V21H24" fill="none" stroke="#0b5cf0" stroke-width="1.7"/><path d="M1 16.5L8 15 16.5 2.5 24 7.5" fill="none" stroke="#0b5cf0" stroke-width="1.7"/></svg>
<div class="t " style="left:2184px;top:479.5px;font-size:12px;line-height:20px;color:#0b57e0;width:64px;text-align:center;"><i>时</i><i>序</i><i>图</i></div>
<div class="r" style="left:2258px;top:446px;width:64px;height:64px;background:#fff;border:1px solid #dfe3ed;"></div>
<svg class="r" style="left:2278px;top:452px;" width="24" height="24" viewBox="0 0 24 24"><rect x="2.5" y="6" width="7" height="16" fill="#c9cfdc"/><rect x="15" y="10" width="7" height="12" fill="#c9cfdc"/><rect x="8.5" y="0" width="7.5" height="22" fill="#9aa5bd"/><rect x="0" y="21.5" width="24" height="2" fill="#3a3d45"/></svg>
<div class="t " style="left:2258px;top:479.5px;font-size:12px;line-height:20px;color:#4d5563;width:64px;text-align:center;"><i>柱</i><i>状</i><i>图</i></div>
<div class="r" style="left:2332px;top:446px;width:64px;height:64px;background:#fff;border:1px solid #dfe3ed;"></div>
<svg class="r" style="left:2352px;top:452px;" width="24" height="24" viewBox="0 0 24 24"><path d="M0 17l5 1.5 6-2 7-3 6 3V24H0z" fill="#c9cfdc"/><text x="-0.3" y="12" font-family="Liberation Sans" font-weight="700" font-size="12.5" fill="#8fa0c4">1</text><text x="7.3" y="12" font-family="Liberation Sans" font-weight="700" font-size="12.5" fill="#2a2d35">2</text><text x="15.2" y="12" font-family="Liberation Sans" font-weight="700" font-size="12.5" fill="#b3c1de">3</text></svg>
<div class="t " style="left:2332px;top:479.5px;font-size:12px;line-height:20px;color:#4d5563;width:64px;text-align:center;"><i>单</i><i>值</i><i>图</i></div>
<div class="r" style="left:2406px;top:446px;width:64px;height:64px;background:#fff;border:1px solid #dfe3ed;"></div>
<svg class="r" style="left:2426px;top:452px;" width="24" height="24" viewBox="0 0 24 24"><path d="M3 17.5A9.3 9.3 0 0 1 16.2 6.2" fill="none" stroke="#98a7c3" stroke-width="3.8"/><path d="M16.2 6.2A9.3 9.3 0 0 1 21 17.5" fill="none" stroke="#d3d9e6" stroke-width="3.8"/><path d="M9.6 18.6L15.3 9.8 13.4 20.2a2 2 0 0 1-3.8-1.6z" fill="#3a3d45"/><rect x="2.5" y="21.3" width="19" height="1.7" fill="#3a3d45"/></svg>
<div class="t " style="left:2406px;top:479.5px;font-size:12px;line-height:20px;color:#4d5563;width:64px;text-align:center;"><i>计</i><i>量</i><i>仪</i></div>
<div class="r" style="left:2110px;top:520px;width:64px;height:64px;background:#fff;border:1px solid #dfe3ed;"></div>
<svg class="r" style="left:2130px;top:526px;" width="24" height="24" viewBox="0 0 24 24"><circle cx="12" cy="12" r="9" fill="none" stroke="#d0d6e3" stroke-width="4.4"/><path d="M6.4 19.05A9 9 0 0 1 4.2 7.5" fill="none" stroke="#8f9bb3" stroke-width="4.4"/><path d="M4.2 7.5A9 9 0 0 1 12.8 3.03" fill="none" stroke="#3a3d45" stroke-width="4.4"/></svg>
<div class="t " style="left:2110px;top:553.5px;font-size:12px;line-height:20px;color:#4d5563;width:64px;text-align:center;"><i>饼</i><i>图</i></div>
<div class="r" style="left:2184px;top:520px;width:64px;height:64px;background:#fff;border:1px solid #dfe3ed;"></div>
<svg class="r" style="left:2204px;top:526px;" width="24" height="24" viewBox="0 0 24 24"><defs><linearGradient id="sk" x1="0" y1="0" x2="1" y2="1"><stop offset="0" stop-color="#8d99b3"/><stop offset="1" stop-color="#ccd3e1"/></linearGradient></defs><path d="M1 2.5h22V8H1z" fill="url(#sk)"/><path d="M1 18h22v3.5H1z" fill="#aab4ca"/><path d="M1 8h22v1.5L9 11.5l14 3V18H1v-2.5l12-3.5L1 9.5z" fill="#dde2ec"/><rect x="0" y="2" width="2" height="6.5" fill="#3a3d45"/><rect x="0" y="10" width="2" height="5" fill="#3a3d45"/><rect x="0" y="16.5" width="2" height="5.5" fill="#3a3d45"/><rect x="22" y="2" width="2" height="6" fill="#3a3d45"/><rect x="22" y="10" width="2" height="5.5" fill="#3a3d45"/><rect x="22" y="17.5" width="2" height="4.5" fill="#3a3d45"/></svg>
<div class="t " style="left:2184px;top:553.5px;font-size:12px;line-height:20px;color:#4d5563;width:64px;text-align:center;"><i>桑</i><i>基</i><i>图</i></div>
<div class="r" style="left:2258px;top:520px;width:64px;height:64px;background:#fff;border:1px solid #dfe3ed;"></div>
<svg class="r" style="left:2278px;top:526px;" width="24" height="24" viewBox="0 0 24 24"><path d="M0 3h14L0 14z" fill="#9aa5bd"/><path d="M0 16L9 7l12 17H0z" fill="#aab3c8"/><path d="M15 4h7v17z" fill="#c9cfdc"/><path d="M18.5 0a5 5 0 0 1 5 5c0 3.4-5 8.5-5 8.5s-5-5.1-5-8.5a5 5 0 0 1 5-5z" fill="#3a3d45"/><circle cx="18.5" cy="5" r="2" fill="#fff"/></svg>
<div class="t " style="left:2258px;top:553.5px;font-size:12px;line-height:20px;color:#4d5563;width:64px;text-align:center;"><i>地</i><i>图</i></div>
<div class="r" style="left:2332px;top:520px;width:64px;height:64px;background:#fff;border:1px solid #dfe3ed;"></div>
<svg class="r" style="left:2352px;top:526px;" width="24" height="24" viewBox="0 0 24 24"><text x="0" y="7" font-family="Liberation Sans" font-weight="700" font-size="6.5" fill="#3a3d45" textLength="12" lengthAdjust="spacingAndGlyphs">TEXT</text><text x="16" y="5.5" font-family="Liberation Sans" font-size="4" fill="#b3bdd3" textLength="7" lengthAdjust="spacingAndGlyphs">TEXT</text><text x="3" y="17" font-family="Liberation Sans" font-weight="700" font-size="11" fill="#2a2d35" textLength="21" lengthAdjust="spacingAndGlyphs">TEXT</text><text x="0" y="23.5" font-family="Liberation Sans" font-size="6.5" fill="#6f7fb0" textLength="12" lengthAdjust="spacingAndGlyphs">TEXT</text><text x="13" y="23.5" font-family="Liberation Sans" font-weight="700" font-size="5.5" fill="#3a3d45" textLength="11" lengthAdjust="spacingAndGlyphs">TEXT</text></svg>
<div class="t " style="left:2332px;top:553.5px;font-size:12px;line-height:20px;color:#4d5563;width:64px;text-align:center;"><i>词</i><i>云</i></div>
<div class="r" style="left:2406px;top:520px;width:64px;height:64px;background:#fff;border:1px solid #dfe3ed;"></div>
<svg class="r" style="left:2426px;top:526px;" width="24" height="24" viewBox="0 0 24 24"><path d="M0 1h24l-4.6 9H4.6z" fill="#d3d8e4"/><path d="M4.6 10h14.8l-3.6 7H8.2z" fill="#8f9bb3"/><path d="M8.2 17h7.600L12 24z" fill="#3a3d45"/></svg>
<div class="t " style="left:2406px;top:553.5px;font-size:12px;line-height:20px;color:#4d5563;width:64px;text-align:center;"><i>漏</i><i>斗</i><i>图</i></div>
<div class="r" style="left:2110px;top:594px;width:64px;height:64px;background:#fff;border:1px solid #dfe3ed;"></div>
<svg class="r" style="left:2130px;top:600px;" width="24" height="24" viewBox="0 0 24 24"><rect x="0" y="1.0" width="6" height="7.4" fill="#e3e7f0"/><rect x="6" y="1.0" width="6" height="7.4" fill="#c5cde0"/><rect x="12" y="1.0" width="6" height="7.4" fill="#aab6d3"/><rect x="18" y="1.0" width="6" height="7.4" fill="#8796bb"/><rect x="0" y="8.4" width="6" height="7.4" fill="#c5cde0"/><rect x="6" y="8.4" width="6" height="7.4" fill="#aab6d3"/><rect x="12" y="8.4" width="6" height="7.4" fill="#8796bb"/><rect x="18" y="8.4" width="6" height="7.4" fill="#5a6178"/><rect x="0" y="15.8" width="6" height="7.4" fill="#aab6d3"/><rect x="6" y="15.8" width="6" height="7.4" fill="#8796bb"/><rect x="12" y="15.8" width="6" height="7.4" fill="#5a6178"/><rect x="18" y="15.8" width="6" height="7.4" fill="#3a3d45"/></svg>
<div class="t " style="left:2110px;top:627.5px;font-size:12px;line-height:20px;color:#4d5563;width:64px;text-align:center;"><i>热</i><i>力</i><i>图</i></div>
<div class="r" style="left:2184px;top:594px;width:64px;height:64px;background:#fff;border:1px solid #dfe3ed;"></div>
<svg class="r" style="left:2204px;top:600px;" width="24" height="24" viewBox="0 0 24 24"><path d="M12 0.5l10 5.700v11.6l-10 5.700-10-5.700V6.2z" fill="#d3d8e4" stroke="#b9c1d3" stroke-width="1"/><path d="M10 3.5l8.5 5 1 8-7 4.500-7.500-5.5 1.500-8z" fill="#8f9bb3" stroke="#6c7690" stroke-width="1"/></svg>
<div class="t " style="left:2184px;top:627.5px;font-size:12px;line-height:20px;color:#4d5563;width:64px;text-align:center;"><i>雷</i><i>达</i><i>图</i></div>
<div class="r" style="left:2258px;top:594px;width:64px;height:64px;background:#fff;border:1px solid #dfe3ed;"></div>
<svg class="r" style="left:2278px;top:600px;" width="24" height="24" viewBox="0 0 24 24"><rect x="0.6" y="6" width="6" height="12" fill="#8f9bb3" stroke="#5a6685" stroke-width="1.2"/><path d="M7 12L17 5M7 12h11M7 12l10 7" fill="none" stroke="#aeb8cf" stroke-width="2"/><rect x="18.5" y="1" width="4.5" height="7" fill="#d3d8e4" stroke="#aeb8cf" stroke-width="1"/><rect x="18.5" y="16" width="4.5" height="7" fill="#d3d8e4" stroke="#aeb8cf" stroke-width="1"/></svg>
<div class="t " style="left:2258px;top:627.5px;font-size:12px;line-height:20px;color:#4d5563;width:64px;text-align:center;"><i>拓</i><i>扑</i><i>图</i></div>
<div class="r" style="left:2173px;top:435px;width:84px;height:86px;border:4px solid #ff1e00;"></div>
<div class="r" style="left:2090px;top:676px;width:399px;height:1px;background:#e3e7ef;"></div>
<svg class="r" style="left:2107px;top:694px;" width="8" height="6" viewBox="0 0 8 6"><path d="M0 0h8L4 6z" fill="#111"/></svg>
<div class="t " style="left:2123.8px;top:687.3px;font-size:12px;line-height:20px;color:#000;"><i>基</i><i>础</i><i>信</i><i>息</i></div>
<div class="t " style="left:2110px;top:717.8px;font-size:12px;line-height:20px;color:#222;"><i>图</i><i>表</i><i>名</i><i>称</i></div>
<div class="r" style="left:2110px;top:741px;width:200px;height:30px;background:#fff;border:1px solid #dfe3ed;"></div>
<div class="r" style="left:2090px;top:779px;width:399px;height:1px;background:#e3e7ef;"></div>
<svg class="r" style="left:2107px;top:797px;" width="8" height="6" viewBox="0 0 8 6"><path d="M0 0h8L4 6z" fill="#111"/></svg>
<div class="t " style="left:2123.8px;top:790.3px;font-size:12px;line-height:20px;color:#000;"><i>统</i><i>计</i><i>分</i><i>析</i><i>字</i><i>段</i></div>
<div class="t " style="left:2110px;top:821.3px;font-size:12px;line-height:20px;color:#222;"><i>时</i><i>间</i><i>字</i><i>段</i></div>
<div class="r" style="left:2110px;top:844px;width:359px;height:30px;background:#fff;border:1px solid #dfe3ed;"></div>
<div class="t " style="left:2115.5px;top:849px;font-size:12px;line-height:20px;color:#969ba6;"><i>自</i><i>动</i></div>
<div class="t " style="left:2110px;top:888.8px;font-size:12px;line-height:20px;color:#222;"><i>维</i><i>度</i><i>字</i><i>段</i></div>
<div class="r" style="left:2110px;top:912px;width:359px;height:30px;background:#fff;border:1px solid #dfe3ed;"></div>
<div class="t " style="left:2115.5px;top:917px;font-size:12px;line-height:20px;color:#969ba6;"><i>自</i><i>动</i></div>
<div class="t " style="left:2110px;top:956.8px;font-size:12px;line-height:20px;color:#222;"><i>指</i><i>标</i><i>字</i><i>段</i></div>
<div class="r" style="left:2110px;top:980px;width:359px;height:30px;background:#fff;border:1px solid #dfe3ed;"></div>
<div class="t " style="left:2115.5px;top:985px;font-size:12px;line-height:20px;color:#969ba6;"><i>自</i><i>动</i></div>
<div class="r" style="left:2090px;top:1018px;width:399px;height:1px;background:#e3e7ef;"></div>
</body></html>
